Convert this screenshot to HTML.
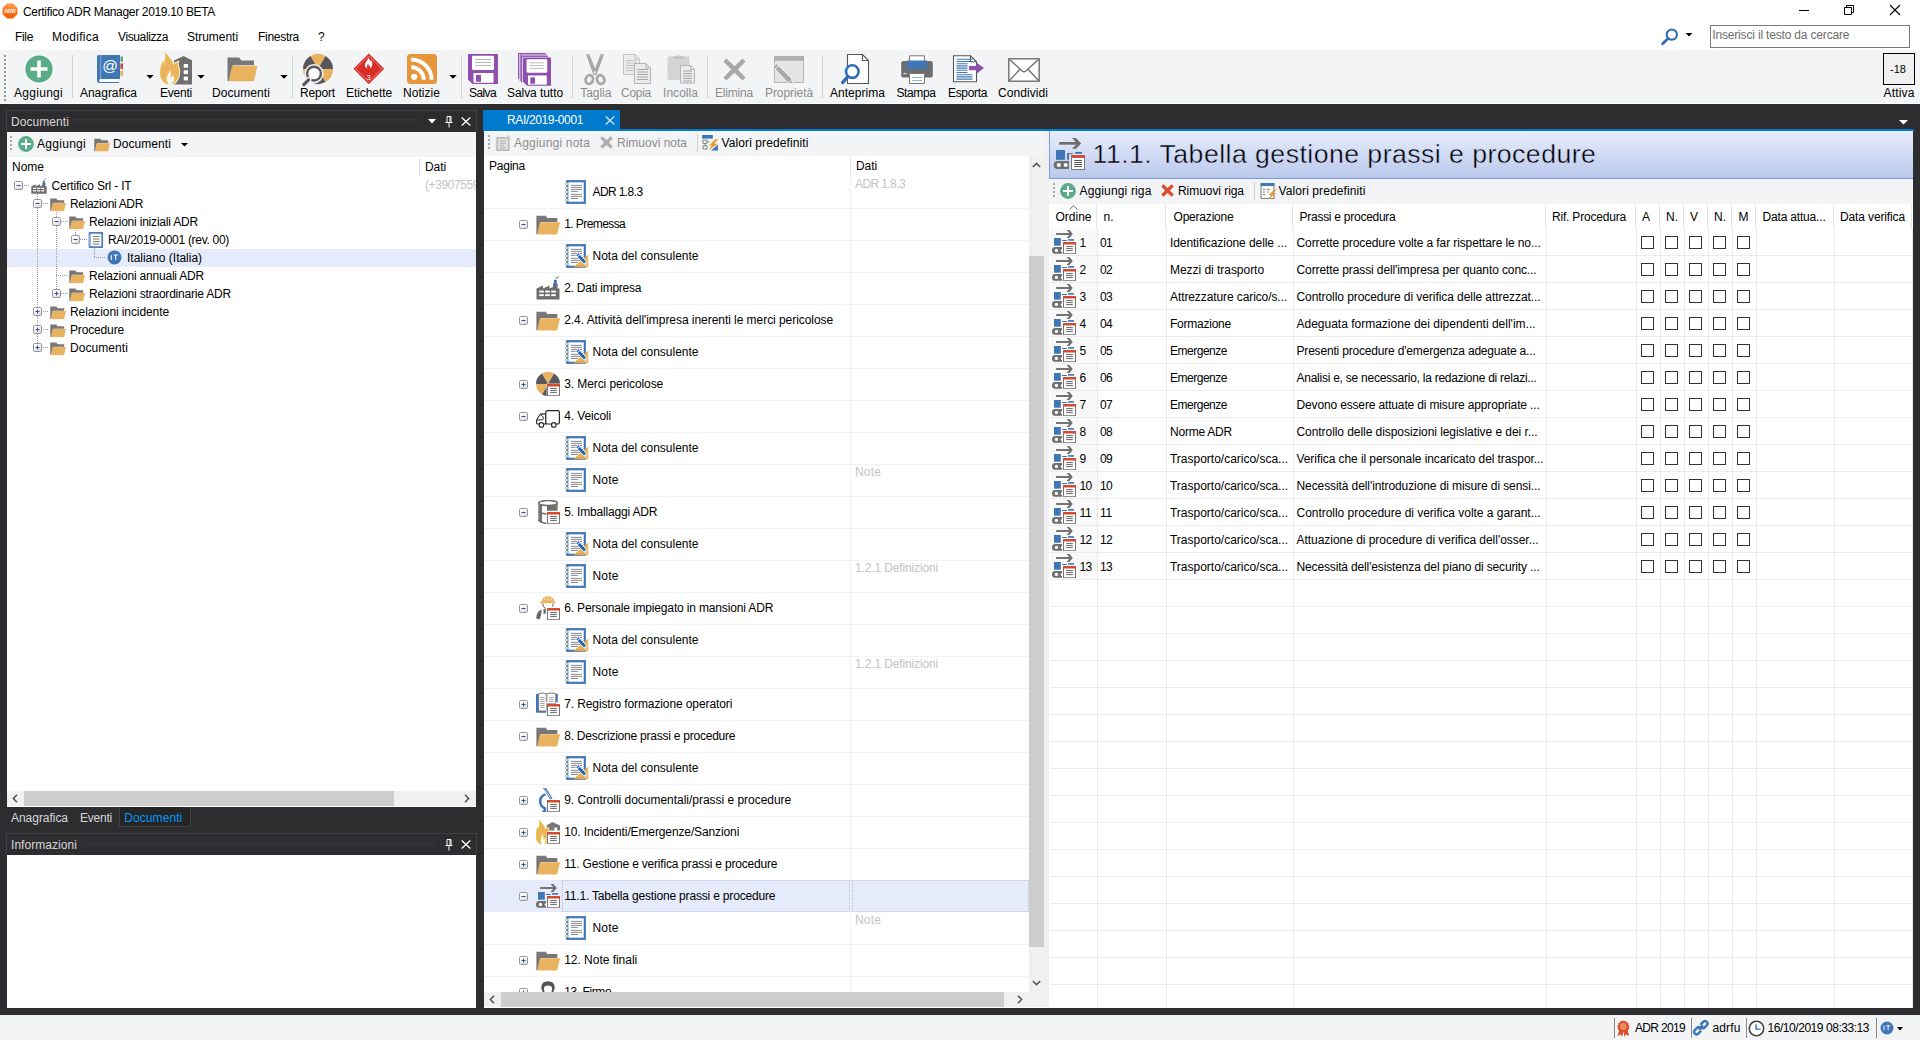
<!DOCTYPE html>
<html lang="it"><head><meta charset="utf-8"><title>Certifico ADR Manager 2019.10 BETA</title><style>
html,body{margin:0;padding:0;}
body{width:1920px;height:1040px;position:relative;overflow:hidden;background:#fff;font-family:"Liberation Sans", "DejaVu Sans", sans-serif;font-size:12px;}
div,span.t,svg.i{position:absolute;box-sizing:content-box;}
span.t{white-space:pre;line-height:16px;height:16px;font-size:12px;}
svg.i{overflow:visible;}
</style></head>
<body>
<svg width="0" height="0" style="position:absolute"><defs><linearGradient id="eg" x1="0" y1="0" x2="0.6" y2="1"><stop offset="0.3" stop-color="#ffffff"/><stop offset="1" stop-color="#dcdcdc"/></linearGradient><symbol id="add" viewBox="0 0 32 32"><circle cx="16" cy="16" r="13.6" fill="#5aab87"/><path d="M14.2 7.5h3.6v6.7h6.7v3.6h-6.7v6.7h-3.6v-6.7H7.5v-3.6h6.7z" fill="#fff"/></symbol><symbol id="add16" viewBox="0 0 16 16"><circle cx="8" cy="8" r="7.9" fill="#5aab87"/><path d="M7 3h2v4h4v2h-4v4h-2v-4H3v-2h4z" fill="#fff"/></symbol><symbol id="folder" viewBox="0 0 31 25"><path d="M0.5 0.5H12.5L14.5 3.5H27.5V8.5H6L2 24.5H0.5Z" fill="#777"/><path d="M5.3 9H31L27.3 24.8H1.6Z" fill="#e9b25f"/></symbol><symbol id="book" viewBox="0 0 32 32"><path d="M5 3.5Q5 2 6.5 2H28V26H8.5Q7 26 7 27.5Q7 29 8.5 29H27V30H8Q5 30 5 27.5Z" fill="#3f76b5"/><rect x="8" y="26.6" width="19" height="1.9" fill="#fff"/><rect x="8.3" y="2" width="0.9" height="24" fill="#8fb1dc"/><rect x="28.4" y="3.5" width="2.6" height="5.2" fill="#5aab87"/><rect x="28.4" y="10.4" width="2.6" height="5.6" fill="#d24a32"/><rect x="28.4" y="17.6" width="2.6" height="5.6" fill="#e9b25f"/><text x="18.2" y="17.6" font-family="Liberation Sans,sans-serif" font-size="15.5" fill="#fff" text-anchor="middle">@</text></symbol><symbol id="eventi" viewBox="0 0 33 33"><path d="M14 8.5L23.5 4L32 8.3V32.4H14Z" fill="#6e6e6e"/><rect x="23.7" y="12" width="4.3" height="3.8" fill="#fff"/><rect x="23.7" y="18.3" width="4.3" height="3.8" fill="#fff"/><rect x="23.7" y="24.6" width="4.3" height="3.8" fill="#fff"/><path d="M5.2 0.8C6.5 3 10 5.5 12 9.5C12.8 11 13.2 12 13.2 13C14.5 12 15.8 11 17.6 10.4C17 12.5 18.8 15 19 19C19.3 24 17 29.5 12.8 32C14.8 29 15.2 25.5 13.5 22.5C13 24 12.2 24.8 11.2 25.2C11.8 22 11 19 9.6 17.2C9.4 20 7.2 22 6.6 25C6 28 6.8 30.5 8.2 32C3.5 31 0.4 27 0.4 21.5C0.4 17 1.6 13 3 9.6C3.4 11.5 3.8 13 4.8 14.2C4.2 9 6.8 5 5.2 0.8Z" fill="#f3f4f6" stroke="#f3f4f6" stroke-width="2.4"/><path d="M5.2 0.8C6.5 3 10 5.5 12 9.5C12.8 11 13.2 12 13.2 13C14.5 12 15.8 11 17.6 10.4C17 12.5 18.8 15 19 19C19.3 24 17 29.5 12.8 32C14.8 29 15.2 25.5 13.5 22.5C13 24 12.2 24.8 11.2 25.2C11.8 22 11 19 9.6 17.2C9.4 20 7.2 22 6.6 25C6 28 6.8 30.5 8.2 32C3.5 31 0.4 27 0.4 21.5C0.4 17 1.6 13 3 9.6C3.4 11.5 3.8 13 4.8 14.2C4.2 9 6.8 5 5.2 0.8Z" fill="#e9b25f" stroke="#f1c247" stroke-width="0.9"/></symbol><symbol id="disc" viewBox="0 0 32 32"><path d="M16 16L8.50 3.01A15 15 0 0 1 23.50 3.01Z" fill="#e9b25f"/><path d="M16 16L23.50 3.01A15 15 0 0 1 31.00 16.00Z" fill="#58585a"/><path d="M16 16L31.00 16.00A15 15 0 0 1 23.50 28.99Z" fill="#e9b25f"/><path d="M16 16L23.50 28.99A15 15 0 0 1 8.50 28.99Z" fill="#58585a"/><path d="M16 16L8.50 28.99A15 15 0 0 1 1.00 16.00Z" fill="#e9b25f"/><path d="M16 16L1.00 16.00A15 15 0 0 1 8.50 3.01Z" fill="#58585a"/></symbol><symbol id="report" viewBox="0 0 34 34"><g transform="translate(2,0)"><path d="M16 16L8.50 3.01A15 15 0 0 1 23.50 3.01Z" fill="#e9b25f"/><path d="M16 16L23.50 3.01A15 15 0 0 1 31.00 16.00Z" fill="#58585a"/><path d="M16 16L31.00 16.00A15 15 0 0 1 23.50 28.99Z" fill="#e9b25f"/><path d="M16 16L23.50 28.99A15 15 0 0 1 8.50 28.99Z" fill="#58585a"/><path d="M16 16L8.50 28.99A15 15 0 0 1 1.00 16.00Z" fill="#e9b25f"/><path d="M16 16L1.00 16.00A15 15 0 0 1 8.50 3.01Z" fill="#58585a"/></g><circle cx="14" cy="20.6" r="9.6" fill="#f3f4f6"/><circle cx="14" cy="20.6" r="6.9" fill="#fff" stroke="#58585a" stroke-width="2.4"/><path d="M8.8 26.6L4 31.4" stroke="#f3f4f6" stroke-width="5.4" stroke-linecap="round"/><path d="M8.6 26.8L3.8 31.6" stroke="#58585a" stroke-width="3.2" stroke-linecap="round"/></symbol><symbol id="etichette" viewBox="0 0 34 34"><path d="M17 0.5L33.5 17L17 33.5L0.5 17Z" fill="#d92d27"/><path d="M17 3L31 17L17 31L3 17Z" fill="none" stroke="#f0a09c" stroke-width="0.7"/><g transform="translate(12.6,4.2) scale(1.12)"><path d="M3.2 0C3.6 1.6 5.2 2.6 5.8 4.4C6.1 3.8 6.1 3.3 6 2.8C7.2 4.3 7.6 6.1 7.3 7.9C7 9.7 5.8 11 4.6 11.2C5.4 10.2 5.5 9 4.8 7.8C4.6 8.6 4.3 9 3.8 9.3C4 8.2 3.7 7 3 6.2C3 7.4 2.4 8 2.2 8.9C2 9.8 2.2 10.6 2.8 11.2C1.3 10.8 0.2 9.4 0.2 7.8C0.2 6.2 1 5.2 1.8 4.2C2.6 3 3.4 1.8 3.2 0Z" fill="#fff"/></g><text x="17" y="28.6" font-family="Liberation Sans,sans-serif" font-size="7.5" fill="#fff" text-anchor="middle">3</text></symbol><symbol id="rss" viewBox="0 0 32 32"><rect x="1" y="1" width="30" height="30" rx="3.5" fill="#e6963c"/><circle cx="8.2" cy="23.8" r="3.1" fill="#fff"/><path d="M5.2 14.2A12.6 12.6 0 0 1 17.8 26.8" fill="none" stroke="#fff" stroke-width="4"/><path d="M5.2 6.4A20.4 20.4 0 0 1 25.6 26.8" fill="none" stroke="#fff" stroke-width="4"/></symbol><symbol id="salva" viewBox="0 0 30 30"><path d="M0 0H30V30H4.5L0 25.5Z" fill="#8e4fad"/><rect x="4" y="1.8" width="22" height="14.2" rx="1.2" fill="#fff"/><path d="M7 5.5H23M7 8.5H23M7 11.5H23" stroke="#b9b9b9" stroke-width="1"/><rect x="5.5" y="19" width="20" height="9.8" fill="#fff"/><rect x="8" y="21" width="5" height="6.8" fill="#8e4fad"/></symbol><symbol id="salvatutto" viewBox="0 0 33 33"><path d="M0.5 0.5H27.5" stroke="#8e4fad" stroke-width="1" fill="none"/><path d="M0.5 0V26" stroke="#8e4fad" stroke-width="1"/><path d="M2.2 2H29" stroke="#8e4fad" stroke-width="1"/><path d="M2.2 1.5V28" stroke="#8e4fad" stroke-width="1"/><path d="M3.6 3.4H30" stroke="#8e4fad" stroke-width="1"/><path d="M3.6 3V29.5" stroke="#8e4fad" stroke-width="1"/><g transform="translate(4.8,4.6) scale(0.94)"><path d="M0 0H30V30H4.5L0 25.5Z" fill="#8e4fad"/><rect x="4" y="1.8" width="22" height="14.2" rx="1.2" fill="#fff"/><path d="M7 5.5H23M7 8.5H23M7 11.5H23" stroke="#b9b9b9" stroke-width="1"/><rect x="5.5" y="19" width="20" height="9.8" fill="#fff"/><rect x="8" y="21" width="5" height="6.8" fill="#8e4fad"/></g></symbol><symbol id="taglia" viewBox="0 0 22 32"><path d="M2 0.3L5.4 0.3L13 19.5L9.6 21.6Z" fill="#a8a8a8"/><path d="M20 0.3L16.6 0.3L9 19.5L12.4 21.6Z" fill="#a8a8a8"/><ellipse cx="5.3" cy="25.6" rx="3.6" ry="4.4" fill="none" stroke="#a8a8a8" stroke-width="2.8" transform="rotate(18 5.3 25.6)"/><ellipse cx="16.7" cy="25.6" rx="3.6" ry="4.4" fill="none" stroke="#a8a8a8" stroke-width="2.8" transform="rotate(-18 16.7 25.6)"/><circle cx="11" cy="18.3" r="1.1" fill="#f3f4f6"/></symbol><symbol id="copia" viewBox="0 0 29 31"><path d="M0.5 0.5H12.0L16.5 5.0V20.5H0.5Z" fill="#ebebeb" stroke="#c4c4c4" stroke-width="1"/><path d="M12.0 0.5V5.0H16.5" fill="none" stroke="#c4c4c4" stroke-width="1"/><path d="M3.0 6.5H14.0" stroke="#c4c4c4" stroke-width="1"/><path d="M3.0 9.0H14.0" stroke="#c4c4c4" stroke-width="1"/><path d="M3.0 11.5H14.0" stroke="#c4c4c4" stroke-width="1"/><path d="M3.0 14.0H14.0" stroke="#c4c4c4" stroke-width="1"/><path d="M3.0 16.5H14.0" stroke="#c4c4c4" stroke-width="1"/><path d="M11.5 9.5H23.0L27.5 14.0V29.5H11.5Z" fill="#ebebeb" stroke="#b4b4b4" stroke-width="1"/><path d="M23.0 9.5V14.0H27.5" fill="none" stroke="#b4b4b4" stroke-width="1"/><path d="M14.0 15.5H25.0" stroke="#a8a8a8" stroke-width="1"/><path d="M14.0 18.0H25.0" stroke="#a8a8a8" stroke-width="1"/><path d="M14.0 20.5H25.0" stroke="#a8a8a8" stroke-width="1"/><path d="M14.0 23.0H25.0" stroke="#a8a8a8" stroke-width="1"/><path d="M14.0 25.5H25.0" stroke="#a8a8a8" stroke-width="1"/></symbol><symbol id="incolla" viewBox="0 0 29 31"><rect x="0.5" y="3.3" width="22" height="23.6" rx="1.6" fill="#d4d4d4"/><path d="M6.5 5.6V3.6H9.6Q11.5 -0.6 13.4 3.6H16.5V5.6Z" fill="#bdbdbd"/><circle cx="11.5" cy="2.8" r="0.9" fill="#f3f4f6"/><path d="M13.5 12.5H23.5L27.5 16.5V30.0H13.5Z" fill="#ebebeb" stroke="#b4b4b4" stroke-width="1"/><path d="M23.5 12.5V16.5H27.5" fill="none" stroke="#b4b4b4" stroke-width="1"/><path d="M16.0 18.0H25.0" stroke="#a8a8a8" stroke-width="1"/><path d="M16.0 20.5H25.0" stroke="#a8a8a8" stroke-width="1"/><path d="M16.0 23.0H25.0" stroke="#a8a8a8" stroke-width="1"/><path d="M16.0 25.5H25.0" stroke="#a8a8a8" stroke-width="1"/><path d="M16.0 28.0H25.0" stroke="#a8a8a8" stroke-width="1"/></symbol><symbol id="elimina" viewBox="0 0 24 24"><path d="M3.6 0.4L12 8.6L20.4 0.4L23.6 3.6L15.4 12L23.6 20.4L20.4 23.6L12 15.4L3.6 23.6L0.4 20.4L8.6 12L0.4 3.6Z" fill="#a8a8a8"/></symbol><symbol id="proprieta" viewBox="0 0 32 30"><rect x="1.5" y="1.5" width="29" height="26" fill="#e4e4e4" stroke="#b6b6b6" stroke-width="1"/><rect x="1" y="1" width="30" height="4.8" fill="#b0b0b0"/><path d="M0.2 11.8L3.4 8.6L18.4 23.4L20.2 29.4L14.2 27.2Z" fill="#a8a8a8" stroke="#f0f0f0" stroke-width="1"/><path d="M2.2 14L5.6 10.7" stroke="#f0f0f0" stroke-width="1"/><path d="M15.6 27.6L19 24.4" stroke="#f0f0f0" stroke-width="0.8"/></symbol><symbol id="anteprima" viewBox="0 0 30 32"><path d="M6.5 1.5H21.5L27.5 7.5V30.5H6.5Z" fill="#fff" stroke="#555" stroke-width="1.1"/><path d="M21.5 1.5V7.5H27.5" fill="none" stroke="#555" stroke-width="1.1"/><circle cx="11.3" cy="18.6" r="6.3" fill="#fff" stroke="#2f6db5" stroke-width="2.6"/><path d="M6.5 24L1.8 29.4" stroke="#2f6db5" stroke-width="3.4" stroke-linecap="round"/></symbol><symbol id="stampa" viewBox="0 0 32 30"><path d="M8.5 0.8H23.5V8H8.5Z" fill="#fff" stroke="#777" stroke-width="1"/><rect x="0.2" y="6" width="31.6" height="16.6" rx="2.2" fill="#6e6e6e"/><path d="M6 5.6H26V12.4Q26 14 24.4 14H7.6Q6 14 6 12.4Z" fill="#3f76b5"/><rect x="2.6" y="18" width="3" height="1.2" fill="#ddd"/><path d="M8.5 18.5H23.5V28.5H8.5Z" fill="#fff" stroke="#777" stroke-width="1"/><path d="M11 22.5H21M11 25.5H21" stroke="#8fb1dc" stroke-width="1"/></symbol><symbol id="esporta" viewBox="0 0 33 30"><path d="M1.5 1.5H18.5L24.5 7.5V27.5H1.5Z" fill="#fff" stroke="#555" stroke-width="1.1"/><path d="M18.5 1.5V7.5H24.5" fill="none" stroke="#555" stroke-width="1.1"/><path d="M4.5 5H20.5" stroke="#3f76b5" stroke-width="1.1"/><path d="M4.5 7.2H20.5" stroke="#3f76b5" stroke-width="1.1"/><path d="M4.5 9.4H15.5" stroke="#3f76b5" stroke-width="1.1"/><path d="M4.5 11.6H15.5" stroke="#3f76b5" stroke-width="1.1"/><path d="M4.5 13.8H15.5" stroke="#3f76b5" stroke-width="1.1"/><path d="M4.5 16H15.5" stroke="#3f76b5" stroke-width="1.1"/><path d="M4.5 18.2H15.5" stroke="#3f76b5" stroke-width="1.1"/><path d="M4.5 20.4H20.5" stroke="#3f76b5" stroke-width="1.1"/><path d="M4.5 22.6H20.5" stroke="#3f76b5" stroke-width="1.1"/><path d="M4.5 24.8H20.5" stroke="#3f76b5" stroke-width="1.1"/><path d="M17 11.6H24.5V8.2L32 13.8L24.5 19.4V16H17Z" fill="#8e4fad"/></symbol><symbol id="condividi" viewBox="0 0 32 24"><rect x="0.8" y="0.8" width="30.4" height="22.4" fill="#fff" stroke="#6e6e6e" stroke-width="1.4"/><path d="M1 1L14.5 13.2Q16 14.4 17.5 13.2L31 1" fill="none" stroke="#6e6e6e" stroke-width="1.3"/><path d="M1 23L12 11.2M31 23L20 11.2" fill="none" stroke="#6e6e6e" stroke-width="1.3"/></symbol><symbol id="search" viewBox="0 0 20 20"><circle cx="11.8" cy="7.6" r="5.1" fill="#fff" stroke="#2f6db5" stroke-width="2.1"/><path d="M7.8 11.8L2.6 16.8" stroke="#2f6db5" stroke-width="2.8" stroke-linecap="round"/></symbol><symbol id="app" viewBox="0 0 16 16"><defs><linearGradient id="ag" x1="0" y1="0" x2="0" y2="1"><stop offset="0" stop-color="#ff9a4a"/><stop offset="1" stop-color="#f55a00"/></linearGradient></defs><path d="M5 0.5H11L15.5 5V11L11 15.5H5L0.5 11V5Z" fill="url(#ag)"/><text x="8" y="10" font-family="Liberation Sans,sans-serif" font-size="5.2" font-weight="bold" fill="#fff" text-anchor="middle">ADR</text></symbol><symbol id="factory" viewBox="0 0 24 24"><path d="M0.5 23.5V12.5L7 9.5V12.5L13.5 9.5V12.5L17 10.9V7.4H21.6V12.5H23.5V23.5Z" fill="#6e6e6e"/><rect x="17.8" y="4" width="3" height="5.4" fill="#3f76b5"/><path d="M19.4 3.4Q19.6 1.6 23 0.8" stroke="#6e6e6e" stroke-width="1" fill="none"/><rect x="3.2" y="14.6" width="4.6" height="1.9" fill="#fff"/><rect x="9.2" y="14.6" width="4.6" height="1.9" fill="#fff"/><rect x="15.2" y="14.6" width="4.6" height="1.9" fill="#fff"/><rect x="3.2" y="18.2" width="4.6" height="1.9" fill="#fff"/><rect x="9.2" y="18.2" width="4.6" height="1.9" fill="#fff"/><rect x="15.2" y="18.2" width="4.6" height="1.9" fill="#fff"/></symbol><symbol id="note" viewBox="0 0 21 24"><rect x="2.2" y="1.2" width="17.6" height="21.6" fill="#fff" stroke="#3f76b5" stroke-width="2.2"/><circle cx="1.7" cy="4" r="1.3" fill="#fff" stroke="#999" stroke-width="0.7"/><circle cx="1.7" cy="8" r="1.3" fill="#fff" stroke="#999" stroke-width="0.7"/><circle cx="1.7" cy="12" r="1.3" fill="#fff" stroke="#999" stroke-width="0.7"/><circle cx="1.7" cy="16" r="1.3" fill="#fff" stroke="#999" stroke-width="0.7"/><circle cx="1.7" cy="20" r="1.3" fill="#fff" stroke="#999" stroke-width="0.7"/><path d="M6 5.4H17" stroke="#8a8a8a" stroke-width="1"/><path d="M6 7.4H17" stroke="#8a8a8a" stroke-width="1"/><path d="M6 9.4H17" stroke="#8a8a8a" stroke-width="1"/><path d="M6 11.4H13" stroke="#8a8a8a" stroke-width="1"/><path d="M6 14.4H17" stroke="#8a8a8a" stroke-width="1"/><path d="M6 16.4H17" stroke="#8a8a8a" stroke-width="1"/><path d="M6 18.5H13" stroke="#8a8a8a" stroke-width="1"/></symbol><symbol id="notepen" viewBox="0 0 24 24"><rect x="2.2" y="1.2" width="17.6" height="21.6" fill="#fff" stroke="#3f76b5" stroke-width="2.2"/><circle cx="1.7" cy="4" r="1.3" fill="#fff" stroke="#999" stroke-width="0.7"/><circle cx="1.7" cy="8" r="1.3" fill="#fff" stroke="#999" stroke-width="0.7"/><circle cx="1.7" cy="12" r="1.3" fill="#fff" stroke="#999" stroke-width="0.7"/><circle cx="1.7" cy="16" r="1.3" fill="#fff" stroke="#999" stroke-width="0.7"/><circle cx="1.7" cy="20" r="1.3" fill="#fff" stroke="#999" stroke-width="0.7"/><path d="M6 5.4H17" stroke="#8a8a8a" stroke-width="1"/><path d="M6 7.4H17" stroke="#8a8a8a" stroke-width="1"/><path d="M6 9.4H17" stroke="#8a8a8a" stroke-width="1"/><path d="M6 11.4H13" stroke="#8a8a8a" stroke-width="1"/><path d="M6 14.4H17" stroke="#8a8a8a" stroke-width="1"/><path d="M6 16.4H17" stroke="#8a8a8a" stroke-width="1"/><path d="M6 18.5H13" stroke="#8a8a8a" stroke-width="1"/><path d="M23.2 10.5V23.2H8.2Z" fill="#e9b25f"/><path d="M11 22.2h1M13 21.4h1M15 22.2h1M17 21.4h1" stroke="#b98a3a" stroke-width="0.8"/><path d="M10.8 11.2L13.6 8.8L20.6 16.6L21.4 20.4L17.8 19Z" fill="#2f63ad" stroke="#fff" stroke-width="0.9"/><path d="M12.2 12.8L15 10.4" stroke="#fff" stroke-width="0.9"/><path d="M20.1 18.6L21.4 20.4L19.4 19.7Z" fill="#fff"/></symbol><symbol id="merci" viewBox="0 0 24 24"><path d="M12 12L6.00 1.61A12 12 0 0 1 18.00 1.61Z" fill="#e9b25f"/><path d="M12 12L18.00 1.61A12 12 0 0 1 24.00 12.00Z" fill="#58585a"/><path d="M12 12L24.00 12.00A12 12 0 0 1 18.00 22.39Z" fill="#e9b25f"/><path d="M12 12L18.00 22.39A12 12 0 0 1 6.00 22.39Z" fill="#58585a"/><path d="M12 12L6.00 22.39A12 12 0 0 1 0.00 12.00Z" fill="#e9b25f"/><path d="M12 12L0.00 12.00A12 12 0 0 1 6.00 1.61Z" fill="#58585a"/><rect x="10.6" y="11.6" width="13.8" height="13" fill="#fff" opacity="0.9"/><rect x="11.5" y="12.5" width="12" height="11.2" fill="#fff" stroke="#777" stroke-width="1"/><rect x="11" y="12" width="13" height="2.5" fill="#d24a32"/><path d="M14.2 16.6H20.8M14.2 18.6H20.8M14.2 20.6H20.8" stroke="#666" stroke-width="1"/></symbol><symbol id="truck" viewBox="0 0 24 20"><path d="M9.8 4.8H5.8Q4.6 4.8 3.8 6L1.2 10Q0.6 10.8 0.6 11.8V14Q0.6 15 1.6 15H9.8Z" fill="#fff" stroke="#2b2b2b" stroke-width="1.15"/><path d="M1 10.9H6Q7.4 10.9 7.4 9.4Q7.4 6.6 4.4 5.6" fill="none" stroke="#2b2b2b" stroke-width="1"/><rect x="9.8" y="1.6" width="13.6" height="13.4" rx="1.6" fill="#fff" stroke="#2b2b2b" stroke-width="1.2"/><circle cx="5.4" cy="15.9" r="2.3" fill="#fff" stroke="#2b2b2b" stroke-width="1.15"/><circle cx="17.8" cy="15.9" r="2.3" fill="#fff" stroke="#2b2b2b" stroke-width="1.15"/></symbol><symbol id="barrel" viewBox="0 0 24 24"><path d="M3 3.4V21.4Q6 23.2 10.6 23.4V3.4Z" fill="#fff"/><rect x="3.4" y="4" width="2.6" height="18.2" fill="#6e6e6e"/><rect x="11" y="5.4" width="9.8" height="5.3" fill="#6e6e6e"/><path d="M21 3.5V10.6M3 3.5V21" stroke="#6e6e6e" stroke-width="1.3"/><ellipse cx="12" cy="3" rx="9.4" ry="2.5" fill="#fff" stroke="#6e6e6e" stroke-width="1.5"/><path d="M2.2 11.8Q5.5 13.6 10.6 13.9" stroke="#6e6e6e" stroke-width="1.5" fill="none"/><path d="M2.2 20Q5 22.8 10.6 23.3" stroke="#6e6e6e" stroke-width="1.7" fill="none"/><rect x="10.6" y="11.6" width="13.8" height="13" fill="#fff" opacity="0.9"/><rect x="11.5" y="12.5" width="12" height="11.2" fill="#fff" stroke="#777" stroke-width="1"/><rect x="11" y="12" width="13" height="2.5" fill="#d24a32"/><path d="M14.2 16.6H20.8M14.2 18.6H20.8M14.2 20.6H20.8" stroke="#666" stroke-width="1"/></symbol><symbol id="worker" viewBox="0 0 24 24"><path d="M6 6Q6 0.2 12 0.2Q18 0.2 18 6V5.4H19.4V7.2H4.2V5.4H6Z" fill="#e9b25f"/><path d="M9 1.6V4.2M12 1.2V4.4M15 1.6V4.2" stroke="#fbe7bd" stroke-width="1"/><path d="M6.6 7.6Q6.8 10.5 9.4 12.6" fill="none" stroke="#555" stroke-width="1"/><path d="M17.4 7.6L16.6 10.6" fill="none" stroke="#555" stroke-width="1"/><path d="M7.4 13.4L9.8 12.6V17.6L7.6 18Z" fill="#666"/><path d="M0.2 22.6Q0.4 15.4 5.6 13.6L5.2 18.2L3.6 23.6Z" fill="#666"/><rect x="10.6" y="11.6" width="13.8" height="13" fill="#fff" opacity="0.9"/><rect x="11.5" y="12.5" width="12" height="11.2" fill="#fff" stroke="#777" stroke-width="1"/><rect x="11" y="12" width="13" height="2.5" fill="#d24a32"/><path d="M14.2 16.6H20.8M14.2 18.6H20.8M14.2 20.6H20.8" stroke="#666" stroke-width="1"/></symbol><symbol id="registro" viewBox="0 0 24 24"><path d="M0 2H2.6V18.6H10V20.8H1Q0 20.8 0 19.6Z" fill="#3f76b5"/><path d="M20 2H21.8V10.6L20 9.6Z" fill="#3f76b5"/><path d="M2.6 1.6Q6.5 0.4 10.6 1.8Q15 0.4 19.8 1.6V11.5H10.6V19H2.6Z" fill="#fff" stroke="#777" stroke-width="1"/><path d="M10.6 2V10" stroke="#999" stroke-width="1.6"/><path d="M4.2 5.4H8.6M4.2 7.4H8.6M4.2 9.4H8.6M4.2 11.4H8.6M4.2 13.4H8.6M4.2 15.4H8.6M13 5.4H17.6M13 7.4H17.6M13 9.4H17.6" stroke="#999" stroke-width="0.9"/><rect x="10.6" y="11.6" width="13.8" height="13" fill="#fff" opacity="0.9"/><rect x="11.5" y="12.5" width="12" height="11.2" fill="#fff" stroke="#777" stroke-width="1"/><rect x="11" y="12" width="13" height="2.5" fill="#d24a32"/><path d="M14.2 16.6H20.8M14.2 18.6H20.8M14.2 20.6H20.8" stroke="#666" stroke-width="1"/></symbol><symbol id="controlli" viewBox="0 0 24 24"><path d="M9.6 6.4Q4.2 8 4.2 13.4Q4.2 18.4 9 20.4V23.6H6.4" fill="none" stroke="#3f76b5" stroke-width="2.5"/><path d="M7.6 0.6L10 0L16.6 10.4L14 11.6Z" fill="#3f76b5"/><path d="M9.4 2.2L14.8 10.4" stroke="#fff" stroke-width="0.8"/><path d="M7 1L8 0" stroke="#777" stroke-width="0.8"/><rect x="10.6" y="11.6" width="13.8" height="13" fill="#fff" opacity="0.9"/><rect x="11.5" y="12.5" width="12" height="11.2" fill="#fff" stroke="#777" stroke-width="1"/><rect x="11" y="12" width="13" height="2.5" fill="#d24a32"/><path d="M14.2 16.6H20.8M14.2 18.6H20.8M14.2 20.6H20.8" stroke="#666" stroke-width="1"/></symbol><symbol id="incidenti" viewBox="0 0 24 24"><path d="M10.6 5.6L16.3 2L24 5.6V10.6H21.2V7.4H18.4V10.6H13.2V7.4H10.6Z" fill="#777"/><g transform="translate(-0.2,-0.2) scale(0.7,0.76)"><path d="M5.2 0.8C6.5 3 10 5.5 12 9.5C12.8 11 13.2 12 13.2 13C14.5 12 15.8 11 17.6 10.4C17 12.5 18.8 15 19 19C19.3 24 17 29.5 12.8 32C14.8 29 15.2 25.5 13.5 22.5C13 24 12.2 24.8 11.2 25.2C11.8 22 11 19 9.6 17.2C9.4 20 7.2 22 6.6 25C6 28 6.8 30.5 8.2 32C3.5 31 0.4 27 0.4 21.5C0.4 17 1.6 13 3 9.6C3.4 11.5 3.8 13 4.8 14.2C4.2 9 6.8 5 5.2 0.8Z" fill="#e9b25f" stroke="#f0c030" stroke-width="1.3"/></g><rect x="10.6" y="11.6" width="13.8" height="13" fill="#fff" opacity="0.9"/><rect x="11.5" y="12.5" width="12" height="11.2" fill="#fff" stroke="#777" stroke-width="1"/><rect x="11" y="12" width="13" height="2.5" fill="#d24a32"/><path d="M14.2 16.6H20.8M14.2 18.6H20.8M14.2 20.6H20.8" stroke="#666" stroke-width="1"/></symbol><symbol id="gestione32" viewBox="0 0 32 32"><rect x="6.2" y="4" width="19.5" height="2.7" fill="#6e6e6e"/><path d="M19 0H23L28.2 5.4L23 10.8H19L24.2 5.4Z" fill="#6e6e6e"/><rect x="3" y="12" width="9" height="9.8" fill="#3f76b5"/><rect x="14.1" y="15.1" width="1.9" height="6.7" fill="#3f76b5"/><rect x="14.1" y="15.1" width="5.7" height="1.1" fill="#3f76b5"/><rect x="22.1" y="14" width="6.9" height="1.8" fill="#3f76b5"/><path d="M4 23.1H16V31H4A4 4 0 0 1 4 23.1Z" fill="#6e6e6e"/><circle cx="5.8" cy="27" r="2.1" fill="#fff"/><circle cx="12.7" cy="27" r="2.1" fill="#fff"/><rect x="17.4" y="16.4" width="15.2" height="16.2" fill="#fff" opacity="0.6"/><rect x="18.5" y="17.5" width="13" height="14" fill="#fff" stroke="#777" stroke-width="1"/><rect x="18" y="17" width="14" height="2.9" fill="#d24a32"/><path d="M21.2 22.5H29M21.2 24.5H29M21.2 26.5H29M21.2 28.6H29" stroke="#555" stroke-width="1"/></symbol><symbol id="gestione" viewBox="0 0 24 24"><rect x="4.1" y="3.05" width="14.5" height="1.9" fill="#6e6e6e"/><path d="M14.6 0H17.4L20.8 4L17.4 8H14.6L18 4Z" fill="#6e6e6e"/><rect x="2" y="8" width="6.8" height="7.7" fill="#3f76b5"/><rect x="10.1" y="10" width="4.8" height="1" fill="#3f76b5"/><rect x="16" y="9.1" width="6" height="1.6" fill="#3f76b5"/><path d="M3.4 17H10V23.8H3.4A3.4 3.4 0 0 1 3.4 17Z" fill="#6e6e6e"/><circle cx="4.4" cy="20.4" r="1.7" fill="#fff"/><circle cx="10.2" cy="20.4" r="1.5" fill="#fff"/><rect x="10.6" y="11.6" width="13.8" height="13" fill="#fff" opacity="0.9"/><rect x="11.5" y="12.5" width="12" height="11.2" fill="#fff" stroke="#777" stroke-width="1"/><rect x="11" y="12" width="13" height="2.5" fill="#d24a32"/><path d="M14.2 16.6H20.8M14.2 18.6H20.8M14.2 20.6H20.8" stroke="#666" stroke-width="1"/></symbol><symbol id="person" viewBox="0 0 24 24"><path d="M5.5 9Q4.5 1.2 12 1.2Q19.5 1.2 18.5 9L17 13H7Z" fill="#555"/><path d="M8 8Q8 5.5 12 5.5Q16 5.5 16 8Q16 15 12 15Q8 15 8 8Z" fill="#fff"/></symbol><symbol id="doclist" viewBox="0 0 15 16"><rect x="1.6" y="0.9" width="12.6" height="14.2" fill="#fff" stroke="#3f76b5" stroke-width="1.6"/><circle cx="1.6" cy="3" r="0.9" fill="#fff" stroke="#3f76b5" stroke-width="0.6"/><circle cx="1.6" cy="5.5" r="0.9" fill="#fff" stroke="#3f76b5" stroke-width="0.6"/><circle cx="1.6" cy="8" r="0.9" fill="#fff" stroke="#3f76b5" stroke-width="0.6"/><circle cx="1.6" cy="10.5" r="0.9" fill="#fff" stroke="#3f76b5" stroke-width="0.6"/><circle cx="1.6" cy="13" r="0.9" fill="#fff" stroke="#3f76b5" stroke-width="0.6"/><path d="M5 4.5H11.5M5 7H11.5M5 9.5H11.5M5 12H11.5" stroke="#777" stroke-width="1"/></symbol><symbol id="it" viewBox="0 0 16 16"><circle cx="8" cy="8" r="7.4" fill="#3f76b5"/><path d="M4.6 5.4V10.6M7 5.4H11.6M9.3 5.4V10.6" stroke="#fff" stroke-width="1.1" fill="none"/></symbol><symbol id="xred" viewBox="0 0 14 14"><path d="M2.6 0.2L7 4.4L11.4 0.2L13.8 2.6L9.6 7L13.8 11.4L11.4 13.8L7 9.6L2.6 13.8L0.2 11.4L4.4 7L0.2 2.6Z" fill="#d8502e"/></symbol><symbol id="xgrey" viewBox="0 0 14 14"><path d="M2.6 0.2L7 4.4L11.4 0.2L13.8 2.6L9.6 7L13.8 11.4L11.4 13.8L7 9.6L2.6 13.8L0.2 11.4L4.4 7L0.2 2.6Z" fill="#b0b0b0"/></symbol><symbol id="valori" viewBox="0 0 17 17"><rect x="1" y="2.6" width="13" height="12.8" fill="#fff" stroke="#777" stroke-width="1"/><rect x="0.5" y="0" width="14" height="2.7" fill="#3f76b5"/><path d="M3 6.4H5.2M3 9H5.2M3 11.6H5.2M6.8 6.4H9.6M6.8 9H8.6" stroke="#777" stroke-width="1"/><path d="M14.4 6.6L8.4 12.2H11.2L7.8 16.8L16.2 10.2H13L16.4 6.6Z" fill="#e8962e"/></symbol><symbol id="valori2" viewBox="0 0 17 16"><rect x="0" y="0" width="10.8" height="3.6" fill="#3f76b5"/><path d="M1 5.2H5V8.4H1ZM1 10.8H5V14H1Z" fill="#fff" stroke="#777" stroke-width="0.9"/><path d="M3 8.4V10.8M5 6.8H7.2" stroke="#777" stroke-width="0.9" fill="none"/><path d="M16 9.6V15.6H9Z" fill="#3f76b5"/><path d="M13.5 4.2L7 10.6H10L6.4 15.6L15.6 8.8H12.2L16 4.2Z" fill="#e8962e"/></symbol><symbol id="addnote" viewBox="0 0 16 16"><rect x="2.2" y="2.8" width="11.6" height="12.4" fill="#e2e2e2" stroke="#b0b0b0" stroke-width="1.4"/><circle cx="2" cy="4.5" r="0.9" fill="#eee" stroke="#b0b0b0" stroke-width="0.6"/><circle cx="2" cy="7" r="0.9" fill="#eee" stroke="#b0b0b0" stroke-width="0.6"/><circle cx="2" cy="9.5" r="0.9" fill="#eee" stroke="#b0b0b0" stroke-width="0.6"/><circle cx="2" cy="12" r="0.9" fill="#eee" stroke="#b0b0b0" stroke-width="0.6"/><circle cx="2" cy="14" r="0.9" fill="#eee" stroke="#b0b0b0" stroke-width="0.6"/><path d="M5 6H11M5 8.3H11M5 10.6H9M5 12.9H11" stroke="#aaa" stroke-width="0.9"/><path d="M13 0V5M10.5 2.5H15.5M11.2 0.7L14.8 4.3M14.8 0.7L11.2 4.3" stroke="#c8c8c8" stroke-width="0.8"/></symbol><symbol id="medal" viewBox="0 0 14 16"><path d="M3 9L1.6 15.2L4.4 13.8L6 15.8L7 10Z" fill="#d8502e"/><path d="M11 9L12.4 15.2L9.6 13.8L8 15.8L7 10Z" fill="#d8502e"/><path d="M7 0.2L8.3 1.2L9.9 0.9L10.6 2.4L12.2 2.8L12.1 4.4L13.3 5.5L12.5 6.9L13.1 8.4L11.8 9.3L11.6 10.9L10 11L9 12.3L7.5 11.7L6 12.4L5 11.1L3.4 11L3.1 9.4L1.8 8.5L2.4 7L1.5 5.6L2.7 4.5L2.5 2.9L4.1 2.4L4.8 0.9L6.4 1.2Z" fill="#d8502e" transform="translate(-0.4,0)"/><circle cx="6.9" cy="6.2" r="3.3" fill="#ef8a5a"/></symbol><symbol id="link" viewBox="0 0 16 16"><g fill="none" stroke="#3f76b5" stroke-width="2.3" stroke-linecap="round"><path d="M7 9L9.4 6.6"/><path d="M8.4 4.6L10.4 2.6Q12 1 13.6 2.6Q15.2 4.2 13.6 5.8L11.6 7.8Q10 9.2 8.6 8"/><path d="M7.8 11.4L5.8 13.4Q4.2 15 2.6 13.4Q1 11.8 2.6 10.2L4.6 8.2Q6.2 6.8 7.6 8"/></g></symbol><symbol id="clock" viewBox="0 0 16 16"><circle cx="8" cy="8" r="6.8" fill="#fff" stroke="#444" stroke-width="1.5"/><path d="M7.6 4V8.6H12" fill="none" stroke="#2f6db5" stroke-width="1.3"/></symbol></defs></svg>
<svg class="i" style="left:2.2px;top:2.6px;" width="16" height="16"><use href="#app"/></svg>
<span class="t" style="left:23px;top:3.5px;color:#000;letter-spacing:-0.329px;">Certifico ADR Manager 2019.10 BETA</span>
<svg class="i" style="left:1790px;top:0" width="130" height="22"><path d="M9 10.5H19" stroke="#000" stroke-width="1"/><path d="M54.5 7.5H61.5V14.5H54.5Z M56.5 7.5V5.5H63.5V12.5H61.5" fill="none" stroke="#000" stroke-width="1"/><path d="M100 5L110 15M110 5L100 15" stroke="#000" stroke-width="1.1"/></svg>
<span class="t" style="left:15px;top:28.5px;color:#000;letter-spacing:-0.336px;">File</span>
<span class="t" style="left:52px;top:28.5px;color:#000;letter-spacing:0.289px;">Modifica</span>
<span class="t" style="left:118px;top:28.5px;color:#000;letter-spacing:-0.381px;">Visualizza</span>
<span class="t" style="left:187px;top:28.5px;color:#000;letter-spacing:-0.038px;">Strumenti</span>
<span class="t" style="left:258px;top:28.5px;color:#000;letter-spacing:-0.293px;">Finestra</span>
<span class="t" style="left:318px;top:28.5px;color:#000;letter-spacing:-1.672px;">?</span>
<svg class="i" style="left:1660px;top:26.5px;" width="20" height="20"><use href="#search"/></svg>
<svg class="i" style="left:1685px;top:33px" width="8" height="4"><path d="M0.5 0H7.5L4 3.6Z" fill="#000"/></svg>
<div style="left:1710px;top:25px;width:198px;height:21px;background:#fff;border:1px solid #7a7a7a;"></div>
<span class="t" style="left:1712.3px;top:27.0px;color:#6d6d6d;letter-spacing:-0.173px;">Inserisci il testo da cercare</span>
<div style="left:0px;top:50px;width:1920px;height:53px;background:#f3f4f6;"></div>
<div style="left:0px;top:103px;width:1920px;height:1px;background:#fff;"></div>
<div style="left:4px;top:55px;width:2px;height:46px;background-image:repeating-linear-gradient(#9a9a9a 0 2px,transparent 2px 4px);"></div>
<svg class="i" style="left:22.5px;top:52.5px;" width="32" height="32"><use href="#add"/></svg>
<span class="t" style="left:14px;top:84.5px;color:#000;letter-spacing:0.287px;">Aggiungi</span>
<div style="left:72px;top:55px;width:1px;height:43px;background:#d2d2d2;"></div>
<svg class="i" style="left:92px;top:53px;" width="32" height="32"><use href="#book"/></svg>
<span class="t" style="left:80px;top:84.5px;color:#000;letter-spacing:-0.036px;">Anagrafica</span>
<svg class="i" style="left:146.2px;top:75px" width="8" height="4"><path d="M0.3 0H7.7L4 3.8Z" fill="#000"/></svg>
<svg class="i" style="left:160px;top:52px;" width="33" height="33"><use href="#eventi"/></svg>
<span class="t" style="left:160px;top:84.5px;color:#000;letter-spacing:-0.224px;">Eventi</span>
<svg class="i" style="left:196.5px;top:75px" width="8" height="4"><path d="M0.3 0H7.7L4 3.8Z" fill="#000"/></svg>
<svg class="i" style="left:226.5px;top:57.3px;" width="30.5" height="24.6"><use href="#folder"/></svg>
<span class="t" style="left:212px;top:84.5px;color:#000;letter-spacing:0.071px;">Documenti</span>
<svg class="i" style="left:280.2px;top:75px" width="8" height="4"><path d="M0.3 0H7.7L4 3.8Z" fill="#000"/></svg>
<div style="left:292px;top:55px;width:1px;height:43px;background:#d2d2d2;"></div>
<svg class="i" style="left:300px;top:53px;" width="34" height="34"><use href="#report"/></svg>
<span class="t" style="left:300px;top:84.5px;color:#000;letter-spacing:-0.169px;">Report</span>
<svg class="i" style="left:353.4px;top:53.2px;" width="31.6" height="31.6"><use href="#etichette"/></svg>
<span class="t" style="left:346px;top:84.5px;color:#000;letter-spacing:-0.075px;">Etichette</span>
<svg class="i" style="left:406px;top:53px;" width="32" height="32"><use href="#rss"/></svg>
<span class="t" style="left:403px;top:84.5px;color:#000;letter-spacing:0.045px;">Notizie</span>
<svg class="i" style="left:448.5px;top:75px" width="8" height="4"><path d="M0.3 0H7.7L4 3.8Z" fill="#000"/></svg>
<div style="left:461px;top:55px;width:1px;height:43px;background:#d2d2d2;"></div>
<svg class="i" style="left:468px;top:54px;" width="30" height="30"><use href="#salva"/></svg>
<span class="t" style="left:469px;top:84.5px;color:#000;letter-spacing:-0.603px;">Salva</span>
<svg class="i" style="left:518px;top:52.5px;" width="33" height="33"><use href="#salvatutto"/></svg>
<span class="t" style="left:507px;top:84.5px;color:#000;letter-spacing:-0.061px;">Salva tutto</span>
<div style="left:572px;top:55px;width:1px;height:43px;background:#d2d2d2;"></div>
<svg class="i" style="left:584px;top:53.5px;" width="22" height="32"><use href="#taglia"/></svg>
<span class="t" style="left:580.3px;top:84.5px;color:#8c8c8c;letter-spacing:-0.06px;">Taglia</span>
<svg class="i" style="left:622.5px;top:53.5px;" width="29" height="31"><use href="#copia"/></svg>
<span class="t" style="left:621px;top:84.5px;color:#8c8c8c;letter-spacing:-0.272px;">Copia</span>
<svg class="i" style="left:666.5px;top:53px;" width="29" height="31"><use href="#incolla"/></svg>
<span class="t" style="left:663px;top:84.5px;color:#8c8c8c;letter-spacing:0.045px;">Incolla</span>
<div style="left:707px;top:55px;width:1px;height:43px;background:#d2d2d2;"></div>
<svg class="i" style="left:723px;top:57.5px;" width="23" height="23"><use href="#elimina"/></svg>
<span class="t" style="left:715px;top:84.5px;color:#8c8c8c;letter-spacing:-0.194px;">Elimina</span>
<svg class="i" style="left:773px;top:55px;" width="32" height="30"><use href="#proprieta"/></svg>
<span class="t" style="left:765px;top:84.5px;color:#8c8c8c;letter-spacing:-0.076px;">Proprietà</span>
<div style="left:822px;top:55px;width:1px;height:43px;background:#d2d2d2;"></div>
<svg class="i" style="left:841.4px;top:53px;" width="30" height="32"><use href="#anteprima"/></svg>
<span class="t" style="left:830px;top:84.5px;color:#000;letter-spacing:0.035px;">Anteprima</span>
<svg class="i" style="left:900.5px;top:54.5px;" width="32" height="30"><use href="#stampa"/></svg>
<span class="t" style="left:896.5px;top:84.5px;color:#000;letter-spacing:-0.391px;">Stampa</span>
<svg class="i" style="left:951.8px;top:54px;" width="33" height="30.6"><use href="#esporta"/></svg>
<span class="t" style="left:948px;top:84.5px;color:#000;letter-spacing:-0.335px;">Esporta</span>
<svg class="i" style="left:1008px;top:57.5px;" width="32" height="24"><use href="#condividi"/></svg>
<span class="t" style="left:998px;top:84.5px;color:#000;letter-spacing:0.069px;">Condividi</span>
<div style="left:1883px;top:53px;width:30px;height:30px;background:#f0f0f0;border:1px solid #000;"></div>
<span class="t" style="left:1890px;top:61.0px;color:#000;font-size:11px;letter-spacing:0px;">-18</span>
<span class="t" style="left:1883.5px;top:84.5px;color:#000;letter-spacing:0.167px;">Attiva</span>
<div style="left:0px;top:104px;width:1920px;height:911px;background:#2d2d30;"></div>
<div style="left:0px;top:1015px;width:1920px;height:25px;background:#f3f4f6;"></div>
<div style="left:6px;top:110px;width:469px;height:21px;background:#2d2d30;border:1px solid #3f3f46;border-bottom:none;"></div>
<span class="t" style="left:11px;top:113.5px;color:#d6d6d6;letter-spacing:0.071px;">Documenti</span>
<div style="left:73px;top:118px;width:348px;height:7px;background:linear-gradient(90deg,#47474b 1px,transparent 1px) 0 1px/4px 1px repeat-x,linear-gradient(90deg,#47474b 1px,transparent 1px) 2px 3px/4px 1px repeat-x,linear-gradient(90deg,#47474b 1px,transparent 1px) 0 5px/4px 1px repeat-x;"></div>
<svg class="i" style="left:428px;top:119px" width="8" height="5"><path d="M0 0H8L4 4.5Z" fill="#fff"/></svg>
<svg class="i" style="left:444.5px;top:116px" width="8" height="12"><path d="M2 0.5H6V6.5H2Z M0.5 6.5H7.5 M4 6.5V11.5 M5 0.5V6.5" fill="none" stroke="#fff" stroke-width="1"/></svg>
<svg class="i" style="left:460.5px;top:117px" width="10" height="9"><path d="M0.7 0.5L9.3 8.5M9.3 0.5L0.7 8.5" stroke="#fff" stroke-width="1.3"/></svg>
<div style="left:7px;top:132px;width:469px;height:25px;background:#f3f4f6;"></div>
<div style="left:10px;top:136px;width:2px;height:14px;background-image:repeating-linear-gradient(#a8a8a8 0 2px,transparent 2px 4px);"></div>
<svg class="i" style="left:18px;top:136px;" width="16" height="16"><use href="#add16"/></svg>
<span class="t" style="left:37px;top:136.0px;color:#000;letter-spacing:0.287px;">Aggiungi</span>
<svg class="i" style="left:94px;top:138px;" width="16" height="14"><use href="#folder"/></svg>
<span class="t" style="left:113px;top:136.0px;color:#000;letter-spacing:0.071px;">Documenti</span>
<svg class="i" style="left:181px;top:142.5px" width="7" height="4"><path d="M0 0H7L3.5 3.6Z" fill="#000"/></svg>
<div style="left:7px;top:157px;width:469px;height:634px;background:#fff;"></div>
<span class="t" style="left:12px;top:159.0px;color:#000;letter-spacing:-0.004px;">Nome</span>
<div style="left:419px;top:158px;width:1px;height:18px;background:#e2e2e2;"></div>
<span class="t" style="left:425px;top:159.0px;color:#000;letter-spacing:-0.086px;">Dati</span>
<div style="left:7px;top:249px;width:469px;height:18px;background:#e5ebfa;"></div>
<div style="left:37px;top:193.5px;width:1px;height:154.0px;background-image:repeating-linear-gradient(#9a9a9a 0 1px,transparent 1px 2px);"></div>
<div style="left:56px;top:211.5px;width:1px;height:78.0px;background-image:repeating-linear-gradient(#9a9a9a 0 1px,transparent 1px 2px);"></div>
<div style="left:75px;top:229.5px;width:1px;height:6.0px;background-image:repeating-linear-gradient(#9a9a9a 0 1px,transparent 1px 2px);"></div>
<div style="left:94px;top:247.5px;width:1px;height:10.0px;background-image:repeating-linear-gradient(#9a9a9a 0 1px,transparent 1px 2px);"></div>
<div style="left:23.5px;top:185px;width:6.5px;height:1px;background-image:repeating-linear-gradient(90deg,#9a9a9a 0 1px,transparent 1px 2px);"></div>
<svg class="i" style="left:14.0px;top:181.0px" width="9" height="9"><rect x="0.5" y="0.5" width="8" height="8" rx="1.2" fill="url(#eg)" stroke="#969696"/><path d="M2.5 4.5H6.5" stroke="#2c4ea3" stroke-width="1"/></svg>
<svg class="i" style="left:31px;top:177.5px;" width="16" height="16"><use href="#factory"/></svg>
<span class="t" style="left:51.5px;top:177.5px;color:#000;letter-spacing:-0.185px;">Certifico Srl - IT</span>
<div style="left:42.5px;top:203px;width:6.5px;height:1px;background-image:repeating-linear-gradient(90deg,#9a9a9a 0 1px,transparent 1px 2px);"></div>
<svg class="i" style="left:33.0px;top:199.0px" width="9" height="9"><rect x="0.5" y="0.5" width="8" height="8" rx="1.2" fill="url(#eg)" stroke="#969696"/><path d="M2.5 4.5H6.5" stroke="#2c4ea3" stroke-width="1"/></svg>
<svg class="i" style="left:50px;top:198.0px;" width="16" height="13.6"><use href="#folder"/></svg>
<span class="t" style="left:70px;top:195.5px;color:#000;letter-spacing:-0.338px;">Relazioni ADR</span>
<div style="left:61px;top:221px;width:7px;height:1px;background-image:repeating-linear-gradient(90deg,#9a9a9a 0 1px,transparent 1px 2px);"></div>
<svg class="i" style="left:51.5px;top:217.0px" width="9" height="9"><rect x="0.5" y="0.5" width="8" height="8" rx="1.2" fill="url(#eg)" stroke="#969696"/><path d="M2.5 4.5H6.5" stroke="#2c4ea3" stroke-width="1"/></svg>
<svg class="i" style="left:69px;top:216.0px;" width="16" height="13.6"><use href="#folder"/></svg>
<span class="t" style="left:89px;top:213.5px;color:#000;letter-spacing:-0.201px;">Relazioni iniziali ADR</span>
<div style="left:80px;top:239px;width:7px;height:1px;background-image:repeating-linear-gradient(90deg,#9a9a9a 0 1px,transparent 1px 2px);"></div>
<svg class="i" style="left:70.5px;top:235.0px" width="9" height="9"><rect x="0.5" y="0.5" width="8" height="8" rx="1.2" fill="url(#eg)" stroke="#969696"/><path d="M2.5 4.5H6.5" stroke="#2c4ea3" stroke-width="1"/></svg>
<svg class="i" style="left:88px;top:231.5px;" width="15" height="16"><use href="#doclist"/></svg>
<span class="t" style="left:108px;top:231.5px;color:#000;letter-spacing:-0.296px;">RAI/2019-0001 (rev. 00)</span>
<div style="left:93.5px;top:257px;width:12.5px;height:1px;background-image:repeating-linear-gradient(90deg,#9a9a9a 0 1px,transparent 1px 2px);"></div>
<svg class="i" style="left:107px;top:250.0px;" width="15" height="15"><use href="#it"/></svg>
<span class="t" style="left:127px;top:249.5px;color:#000;letter-spacing:-0.021px;">Italiano (Italia)</span>
<div style="left:56px;top:275px;width:12px;height:1px;background-image:repeating-linear-gradient(90deg,#9a9a9a 0 1px,transparent 1px 2px);"></div>
<svg class="i" style="left:69px;top:270.0px;" width="16" height="13.6"><use href="#folder"/></svg>
<span class="t" style="left:89px;top:267.5px;color:#000;letter-spacing:-0.211px;">Relazioni annuali ADR</span>
<div style="left:61px;top:293px;width:7px;height:1px;background-image:repeating-linear-gradient(90deg,#9a9a9a 0 1px,transparent 1px 2px);"></div>
<svg class="i" style="left:51.5px;top:289.0px" width="9" height="9"><rect x="0.5" y="0.5" width="8" height="8" rx="1.2" fill="url(#eg)" stroke="#969696"/><path d="M2.5 4.5H6.5M4.5 2.5V6.5" stroke="#2c4ea3" stroke-width="1"/></svg>
<svg class="i" style="left:69px;top:288.0px;" width="16" height="13.6"><use href="#folder"/></svg>
<span class="t" style="left:89px;top:285.5px;color:#000;letter-spacing:-0.201px;">Relazioni straordinarie ADR</span>
<div style="left:42.5px;top:311px;width:6.5px;height:1px;background-image:repeating-linear-gradient(90deg,#9a9a9a 0 1px,transparent 1px 2px);"></div>
<svg class="i" style="left:33.0px;top:307.0px" width="9" height="9"><rect x="0.5" y="0.5" width="8" height="8" rx="1.2" fill="url(#eg)" stroke="#969696"/><path d="M2.5 4.5H6.5M4.5 2.5V6.5" stroke="#2c4ea3" stroke-width="1"/></svg>
<svg class="i" style="left:50px;top:306.0px;" width="16" height="13.6"><use href="#folder"/></svg>
<span class="t" style="left:70px;top:303.5px;color:#000;letter-spacing:-0.091px;">Relazioni incidente</span>
<div style="left:42.5px;top:329px;width:6.5px;height:1px;background-image:repeating-linear-gradient(90deg,#9a9a9a 0 1px,transparent 1px 2px);"></div>
<svg class="i" style="left:33.0px;top:325.0px" width="9" height="9"><rect x="0.5" y="0.5" width="8" height="8" rx="1.2" fill="url(#eg)" stroke="#969696"/><path d="M2.5 4.5H6.5M4.5 2.5V6.5" stroke="#2c4ea3" stroke-width="1"/></svg>
<svg class="i" style="left:50px;top:324.0px;" width="16" height="13.6"><use href="#folder"/></svg>
<span class="t" style="left:70px;top:321.5px;color:#000;letter-spacing:-0.151px;">Procedure</span>
<div style="left:42.5px;top:347px;width:6.5px;height:1px;background-image:repeating-linear-gradient(90deg,#9a9a9a 0 1px,transparent 1px 2px);"></div>
<svg class="i" style="left:33.0px;top:343.0px" width="9" height="9"><rect x="0.5" y="0.5" width="8" height="8" rx="1.2" fill="url(#eg)" stroke="#969696"/><path d="M2.5 4.5H6.5M4.5 2.5V6.5" stroke="#2c4ea3" stroke-width="1"/></svg>
<svg class="i" style="left:50px;top:342.0px;" width="16" height="13.6"><use href="#folder"/></svg>
<span class="t" style="left:70px;top:339.5px;color:#000;letter-spacing:0.071px;">Documenti</span>
<span class="t" style="left:425px;top:176.5px;color:#c4c4c4;letter-spacing:-0.413px;width:51px;overflow:hidden;">(+3907559</span>
<div style="left:7px;top:791px;width:469px;height:15px;background:#f0f0f0;"></div>
<div style="left:24px;top:791px;width:370px;height:15px;background:#cdcdcd;"></div>
<svg class="i" style="left:12px;top:794px" width="6" height="9"><path d="M5 0.8L1.4 4.5L5 8.2" fill="none" stroke="#555" stroke-width="1.6"/></svg>
<svg class="i" style="left:464px;top:794px" width="6" height="9"><path d="M1 0.8L4.6 4.5L1 8.2" fill="none" stroke="#555" stroke-width="1.6"/></svg>
<div style="left:7px;top:806px;width:469px;height:1px;background:#fff;"></div>
<span class="t" style="left:11px;top:809.5px;color:#d6d6d6;letter-spacing:-0.036px;">Anagrafica</span>
<span class="t" style="left:80px;top:809.5px;color:#d6d6d6;letter-spacing:-0.224px;">Eventi</span>
<div style="left:119px;top:807px;width:70px;height:19px;background:#252526;border:1px solid #3f3f46;border-top:none;"></div>
<span class="t" style="left:124.3px;top:809.5px;color:#0097fb;letter-spacing:0.071px;">Documenti</span>
<div style="left:6px;top:833px;width:469px;height:21px;background:#2d2d30;border:1px solid #3f3f46;border-bottom:none;"></div>
<span class="t" style="left:11px;top:836.5px;color:#d6d6d6;letter-spacing:0.053px;">Informazioni</span>
<div style="left:82px;top:841px;width:354px;height:7px;background:linear-gradient(90deg,#47474b 1px,transparent 1px) 0 1px/4px 1px repeat-x,linear-gradient(90deg,#47474b 1px,transparent 1px) 2px 3px/4px 1px repeat-x,linear-gradient(90deg,#47474b 1px,transparent 1px) 0 5px/4px 1px repeat-x;"></div>
<svg class="i" style="left:444.5px;top:839px" width="8" height="12"><path d="M2 0.5H6V6.5H2Z M0.5 6.5H7.5 M4 6.5V11.5 M5 0.5V6.5" fill="none" stroke="#fff" stroke-width="1"/></svg>
<svg class="i" style="left:460.5px;top:840px" width="10" height="9"><path d="M0.7 0.5L9.3 8.5M9.3 0.5L0.7 8.5" stroke="#fff" stroke-width="1.3"/></svg>
<div style="left:7px;top:855px;width:469px;height:153px;background:#fff;"></div>
<div style="left:483px;top:110px;width:137px;height:19px;background:#007acc;"></div>
<span class="t" style="left:507px;top:111.5px;color:#fff;letter-spacing:-0.362px;">RAI/2019-0001</span>
<svg class="i" style="left:604.5px;top:115.5px" width="10" height="9"><path d="M0.7 0.5L9.3 8.5M9.3 0.5L0.7 8.5" stroke="#cfe6f7" stroke-width="1.3"/></svg>
<div style="left:483px;top:129px;width:1431px;height:2px;background:#007acc;"></div>
<svg class="i" style="left:1899px;top:120px" width="9" height="5"><path d="M0 0H9L4.5 4.6Z" fill="#fff"/></svg>
<div style="left:484px;top:131px;width:560px;height:25px;background:#f3f4f6;"></div>
<div style="left:488px;top:135px;width:2px;height:14px;background-image:repeating-linear-gradient(#a8a8a8 0 2px,transparent 2px 4px);"></div>
<svg class="i" style="left:495px;top:134.5px;" width="16" height="16"><use href="#addnote"/></svg>
<span class="t" style="left:514px;top:135.0px;color:#8c8c8c;letter-spacing:0.202px;">Aggiungi nota</span>
<svg class="i" style="left:599.5px;top:136px;" width="13" height="13"><use href="#xgrey"/></svg>
<span class="t" style="left:617px;top:135.0px;color:#8c8c8c;letter-spacing:-0.003px;">Rimuovi nota</span>
<div style="left:697px;top:134px;width:1px;height:18px;background:#d2d2d2;"></div>
<svg class="i" style="left:702px;top:135px;" width="17" height="16"><use href="#valori2"/></svg>
<span class="t" style="left:721.5px;top:135.0px;color:#000;letter-spacing:0.102px;">Valori predefiniti</span>
<div style="left:1029px;top:131px;width:20px;height:877px;background:#f0f0f0;"></div>
<div style="left:1029px;top:131px;width:15px;height:25px;background:#f3f4f6;"></div>
<div style="left:484px;top:156px;width:545px;height:836px;background:#fff;"></div>
<span class="t" style="left:489px;top:158.0px;color:#000;letter-spacing:-0.227px;">Pagina</span>
<div style="left:850px;top:157px;width:1px;height:18px;background:#e2e2e2;"></div>
<span class="t" style="left:856px;top:158.0px;color:#000;letter-spacing:-0.086px;">Dati</span>
<div style="left:850px;top:176px;width:1px;height:816px;background:#eef2fb;"></div>
<div style="left:484px;top:156px;width:545px;height:836px;overflow:hidden;"><div style="left:0px;top:52px;width:545px;height:1px;background:#eef2fb;"></div><div style="left:0px;top:84px;width:545px;height:1px;background:#eef2fb;"></div><div style="left:0px;top:116px;width:545px;height:1px;background:#eef2fb;"></div><div style="left:0px;top:148px;width:545px;height:1px;background:#eef2fb;"></div><div style="left:0px;top:180px;width:545px;height:1px;background:#eef2fb;"></div><div style="left:0px;top:212px;width:545px;height:1px;background:#eef2fb;"></div><div style="left:0px;top:244px;width:545px;height:1px;background:#eef2fb;"></div><div style="left:0px;top:276px;width:545px;height:1px;background:#eef2fb;"></div><div style="left:0px;top:308px;width:545px;height:1px;background:#eef2fb;"></div><div style="left:0px;top:340px;width:545px;height:1px;background:#eef2fb;"></div><div style="left:0px;top:372px;width:545px;height:1px;background:#eef2fb;"></div><div style="left:0px;top:404px;width:545px;height:1px;background:#eef2fb;"></div><div style="left:0px;top:436px;width:545px;height:1px;background:#eef2fb;"></div><div style="left:0px;top:468px;width:545px;height:1px;background:#eef2fb;"></div><div style="left:0px;top:500px;width:545px;height:1px;background:#eef2fb;"></div><div style="left:0px;top:532px;width:545px;height:1px;background:#eef2fb;"></div><div style="left:0px;top:564px;width:545px;height:1px;background:#eef2fb;"></div><div style="left:0px;top:596px;width:545px;height:1px;background:#eef2fb;"></div><div style="left:0px;top:628px;width:545px;height:1px;background:#eef2fb;"></div><div style="left:0px;top:660px;width:545px;height:1px;background:#eef2fb;"></div><div style="left:0px;top:692px;width:545px;height:1px;background:#eef2fb;"></div><div style="left:0px;top:788px;width:545px;height:1px;background:#eef2fb;"></div><div style="left:0px;top:820px;width:545px;height:1px;background:#eef2fb;"></div><svg class="i" style="left:81px;top:24.0px;" width="21" height="24"><use href="#note"/></svg><span class="t" style="left:108.5px;top:27.5px;color:#000;letter-spacing:-0.594px;">ADR 1.8.3</span><span class="t" style="left:371px;top:20.0px;color:#c4c4c4;letter-spacing:-0.594px;">ADR 1.8.3</span><svg class="i" style="left:35.0px;top:63.5px" width="9" height="9"><rect x="0.5" y="0.5" width="8" height="8" rx="1.2" fill="url(#eg)" stroke="#969696"/><path d="M2.5 4.5H6.5" stroke="#2c4ea3" stroke-width="1"/></svg><svg class="i" style="left:52px;top:58.5px;" width="24" height="20"><use href="#folder"/></svg><span class="t" style="left:80.20000000000005px;top:59.5px;color:#000;letter-spacing:-0.577px;">1. Premessa</span><svg class="i" style="left:81px;top:88.0px;" width="24" height="24"><use href="#notepen"/></svg><span class="t" style="left:108.5px;top:91.5px;color:#000;letter-spacing:-0.002px;">Nota del consulente</span><svg class="i" style="left:52px;top:120.0px;" width="24" height="24"><use href="#factory"/></svg><span class="t" style="left:80.20000000000005px;top:123.5px;color:#000;letter-spacing:-0.246px;">2. Dati impresa</span><svg class="i" style="left:35.0px;top:159.5px" width="9" height="9"><rect x="0.5" y="0.5" width="8" height="8" rx="1.2" fill="url(#eg)" stroke="#969696"/><path d="M2.5 4.5H6.5" stroke="#2c4ea3" stroke-width="1"/></svg><svg class="i" style="left:52px;top:154.5px;" width="24" height="20"><use href="#folder"/></svg><span class="t" style="left:80.20000000000005px;top:155.5px;color:#000;letter-spacing:-0.05px;">2.4. Attività dell'impresa inerenti le merci pericolose</span><svg class="i" style="left:81px;top:184.0px;" width="24" height="24"><use href="#notepen"/></svg><span class="t" style="left:108.5px;top:187.5px;color:#000;letter-spacing:-0.002px;">Nota del consulente</span><svg class="i" style="left:35.0px;top:223.5px" width="9" height="9"><rect x="0.5" y="0.5" width="8" height="8" rx="1.2" fill="url(#eg)" stroke="#969696"/><path d="M2.5 4.5H6.5M4.5 2.5V6.5" stroke="#2c4ea3" stroke-width="1"/></svg><svg class="i" style="left:52px;top:216.0px;" width="24" height="24"><use href="#merci"/></svg><span class="t" style="left:80.20000000000005px;top:219.5px;color:#000;letter-spacing:-0.09px;">3. Merci pericolose</span><svg class="i" style="left:35.0px;top:255.5px" width="9" height="9"><rect x="0.5" y="0.5" width="8" height="8" rx="1.2" fill="url(#eg)" stroke="#969696"/><path d="M2.5 4.5H6.5" stroke="#2c4ea3" stroke-width="1"/></svg><svg class="i" style="left:52px;top:253.0px;" width="24" height="20"><use href="#truck"/></svg><span class="t" style="left:80.20000000000005px;top:251.5px;color:#000;letter-spacing:-0.103px;">4. Veicoli</span><svg class="i" style="left:81px;top:280.0px;" width="24" height="24"><use href="#notepen"/></svg><span class="t" style="left:108.5px;top:283.5px;color:#000;letter-spacing:-0.002px;">Nota del consulente</span><svg class="i" style="left:81px;top:312.0px;" width="21" height="24"><use href="#note"/></svg><span class="t" style="left:108.5px;top:315.5px;color:#000;letter-spacing:0.164px;">Note</span><span class="t" style="left:371px;top:308.0px;color:#c4c4c4;letter-spacing:0.164px;">Note</span><svg class="i" style="left:35.0px;top:351.5px" width="9" height="9"><rect x="0.5" y="0.5" width="8" height="8" rx="1.2" fill="url(#eg)" stroke="#969696"/><path d="M2.5 4.5H6.5" stroke="#2c4ea3" stroke-width="1"/></svg><svg class="i" style="left:52px;top:344.0px;" width="24" height="24"><use href="#barrel"/></svg><span class="t" style="left:80.20000000000005px;top:347.5px;color:#000;letter-spacing:-0.179px;">5. Imballaggi ADR</span><svg class="i" style="left:81px;top:376.0px;" width="24" height="24"><use href="#notepen"/></svg><span class="t" style="left:108.5px;top:379.5px;color:#000;letter-spacing:-0.002px;">Nota del consulente</span><svg class="i" style="left:81px;top:408.0px;" width="21" height="24"><use href="#note"/></svg><span class="t" style="left:108.5px;top:411.5px;color:#000;letter-spacing:0.164px;">Note</span><span class="t" style="left:371px;top:404.0px;color:#c4c4c4;letter-spacing:-0.14px;">1.2.1 Definizioni</span><svg class="i" style="left:35.0px;top:447.5px" width="9" height="9"><rect x="0.5" y="0.5" width="8" height="8" rx="1.2" fill="url(#eg)" stroke="#969696"/><path d="M2.5 4.5H6.5" stroke="#2c4ea3" stroke-width="1"/></svg><svg class="i" style="left:52px;top:440.0px;" width="24" height="24"><use href="#worker"/></svg><span class="t" style="left:80.20000000000005px;top:443.5px;color:#000;letter-spacing:-0.152px;">6. Personale impiegato in mansioni ADR</span><svg class="i" style="left:81px;top:472.0px;" width="24" height="24"><use href="#notepen"/></svg><span class="t" style="left:108.5px;top:475.5px;color:#000;letter-spacing:-0.002px;">Nota del consulente</span><svg class="i" style="left:81px;top:504.0px;" width="21" height="24"><use href="#note"/></svg><span class="t" style="left:108.5px;top:507.5px;color:#000;letter-spacing:0.164px;">Note</span><span class="t" style="left:371px;top:500.0px;color:#c4c4c4;letter-spacing:-0.14px;">1.2.1 Definizioni</span><svg class="i" style="left:35.0px;top:543.5px" width="9" height="9"><rect x="0.5" y="0.5" width="8" height="8" rx="1.2" fill="url(#eg)" stroke="#969696"/><path d="M2.5 4.5H6.5M4.5 2.5V6.5" stroke="#2c4ea3" stroke-width="1"/></svg><svg class="i" style="left:52px;top:536.0px;" width="24" height="24"><use href="#registro"/></svg><span class="t" style="left:80.20000000000005px;top:539.5px;color:#000;letter-spacing:-0.106px;">7. Registro formazione operatori</span><svg class="i" style="left:35.0px;top:575.5px" width="9" height="9"><rect x="0.5" y="0.5" width="8" height="8" rx="1.2" fill="url(#eg)" stroke="#969696"/><path d="M2.5 4.5H6.5" stroke="#2c4ea3" stroke-width="1"/></svg><svg class="i" style="left:52px;top:570.5px;" width="24" height="20"><use href="#folder"/></svg><span class="t" style="left:80.20000000000005px;top:571.5px;color:#000;letter-spacing:-0.234px;">8. Descrizione prassi e procedure</span><svg class="i" style="left:81px;top:600.0px;" width="24" height="24"><use href="#notepen"/></svg><span class="t" style="left:108.5px;top:603.5px;color:#000;letter-spacing:-0.002px;">Nota del consulente</span><svg class="i" style="left:35.0px;top:639.5px" width="9" height="9"><rect x="0.5" y="0.5" width="8" height="8" rx="1.2" fill="url(#eg)" stroke="#969696"/><path d="M2.5 4.5H6.5M4.5 2.5V6.5" stroke="#2c4ea3" stroke-width="1"/></svg><svg class="i" style="left:52px;top:632.0px;" width="24" height="24"><use href="#controlli"/></svg><span class="t" style="left:80.20000000000005px;top:635.5px;color:#000;letter-spacing:-0.025px;">9. Controlli documentali/prassi e procedure</span><svg class="i" style="left:35.0px;top:671.5px" width="9" height="9"><rect x="0.5" y="0.5" width="8" height="8" rx="1.2" fill="url(#eg)" stroke="#969696"/><path d="M2.5 4.5H6.5M4.5 2.5V6.5" stroke="#2c4ea3" stroke-width="1"/></svg><svg class="i" style="left:52px;top:664.0px;" width="24" height="24"><use href="#incidenti"/></svg><span class="t" style="left:80.20000000000005px;top:667.5px;color:#000;letter-spacing:-0.117px;">10. Incidenti/Emergenze/Sanzioni</span><svg class="i" style="left:35.0px;top:703.5px" width="9" height="9"><rect x="0.5" y="0.5" width="8" height="8" rx="1.2" fill="url(#eg)" stroke="#969696"/><path d="M2.5 4.5H6.5M4.5 2.5V6.5" stroke="#2c4ea3" stroke-width="1"/></svg><svg class="i" style="left:52px;top:698.5px;" width="24" height="20"><use href="#folder"/></svg><span class="t" style="left:80.20000000000005px;top:699.5px;color:#000;letter-spacing:-0.195px;">11. Gestione e verifica prassi e procedure</span><div style="left:0px;top:724px;width:545px;height:32px;background:#e5ebfa;"></div><div style="left:78px;top:724px;width:287px;height:31px;border:1px dotted #b9c2d6;width:286px;height:30px;"></div><div style="left:368px;top:724px;width:176px;height:31px;border:1px dotted #b9c2d6;width:175px;height:30px;"></div><svg class="i" style="left:35.0px;top:735.5px" width="9" height="9"><rect x="0.5" y="0.5" width="8" height="8" rx="1.2" fill="url(#eg)" stroke="#969696"/><path d="M2.5 4.5H6.5" stroke="#2c4ea3" stroke-width="1"/></svg><svg class="i" style="left:52px;top:728.0px;" width="24" height="24"><use href="#gestione"/></svg><span class="t" style="left:80.20000000000005px;top:731.5px;color:#000;letter-spacing:-0.178px;">11.1. Tabella gestione prassi e procedure</span><svg class="i" style="left:81px;top:760.0px;" width="21" height="24"><use href="#note"/></svg><span class="t" style="left:108.5px;top:763.5px;color:#000;letter-spacing:0.164px;">Note</span><span class="t" style="left:371px;top:756.0px;color:#c4c4c4;letter-spacing:0.164px;">Note</span><svg class="i" style="left:35.0px;top:799.5px" width="9" height="9"><rect x="0.5" y="0.5" width="8" height="8" rx="1.2" fill="url(#eg)" stroke="#969696"/><path d="M2.5 4.5H6.5M4.5 2.5V6.5" stroke="#2c4ea3" stroke-width="1"/></svg><svg class="i" style="left:52px;top:794.5px;" width="24" height="20"><use href="#folder"/></svg><span class="t" style="left:80.20000000000005px;top:795.5px;color:#000;letter-spacing:-0.024px;">12. Note finali</span><svg class="i" style="left:35.0px;top:831.5px" width="9" height="9"><rect x="0.5" y="0.5" width="8" height="8" rx="1.2" fill="url(#eg)" stroke="#969696"/><path d="M2.5 4.5H6.5M4.5 2.5V6.5" stroke="#2c4ea3" stroke-width="1"/></svg><svg class="i" style="left:52px;top:824.0px;" width="24" height="24"><use href="#person"/></svg><span class="t" style="left:80.20000000000005px;top:827.5px;color:#000;letter-spacing:-0.408px;">13. Firme</span></div>
<div style="left:1029px;top:256px;width:15px;height:691px;background:#cdcdcd;"></div>
<svg class="i" style="left:1032px;top:162px" width="9" height="6"><path d="M0.8 5L4.5 1.4L8.2 5" fill="none" stroke="#555" stroke-width="1.6"/></svg>
<svg class="i" style="left:1032px;top:980px" width="9" height="6"><path d="M0.8 1L4.5 4.6L8.2 1" fill="none" stroke="#555" stroke-width="1.6"/></svg>
<div style="left:484px;top:992px;width:545px;height:15px;background:#f0f0f0;"></div>
<div style="left:501px;top:992px;width:503px;height:15px;background:#cdcdcd;"></div>
<div style="left:484px;top:1007px;width:565px;height:1px;background:#fff;"></div>
<svg class="i" style="left:489px;top:995px" width="6" height="9"><path d="M5 0.8L1.4 4.5L5 8.2" fill="none" stroke="#555" stroke-width="1.6"/></svg>
<svg class="i" style="left:1017px;top:995px" width="6" height="9"><path d="M1 0.8L4.6 4.5L1 8.2" fill="none" stroke="#555" stroke-width="1.6"/></svg>
<div style="left:1049px;top:131px;width:863px;height:47px;background:linear-gradient(#e7ecfa 0%,#d3ddf5 45%,#b9c8ec 100%);border-left:1px solid #7d9bdb;border-bottom:1px solid #7d9bdb;"></div>
<svg class="i" style="left:1053px;top:138px;" width="32" height="32"><use href="#gestione32"/></svg>
<span class="t" style="left:1092.6px;top:137px;height:34px;line-height:34px;font-size:26.67px;letter-spacing:0.455px;color:#000;-webkit-text-stroke:0.45px #cfd9f3">11.1. Tabella gestione prassi e procedure</span>
<div style="left:1049px;top:179px;width:864px;height:25px;background:#f3f4f6;"></div>
<div style="left:1053px;top:183px;width:2px;height:14px;background-image:repeating-linear-gradient(#a8a8a8 0 2px,transparent 2px 4px);"></div>
<svg class="i" style="left:1060px;top:183px;" width="16" height="16"><use href="#add16"/></svg>
<span class="t" style="left:1079.5px;top:183.0px;color:#000;letter-spacing:0.15px;">Aggiungi riga</span>
<svg class="i" style="left:1160.5px;top:184px;" width="13" height="13"><use href="#xred"/></svg>
<span class="t" style="left:1178px;top:183.0px;color:#000;letter-spacing:-0.059px;">Rimuovi riga</span>
<div style="left:1254px;top:182px;width:1px;height:18px;background:#d2d2d2;"></div>
<svg class="i" style="left:1259.5px;top:182.6px;" width="17" height="17"><use href="#valori"/></svg>
<span class="t" style="left:1278.5px;top:183.0px;color:#000;letter-spacing:0.102px;">Valori predefiniti</span>
<div style="left:1049px;top:204px;width:864px;height:804px;background:#fff;"></div>
<div style="left:1050px;top:229px;width:47px;height:351px;background:#f9f9f9;"></div>
<div style="left:1096px;top:204px;width:1px;height:25px;background:#e6e6e6;"></div>
<div style="left:1097px;top:229px;width:1px;height:779px;background:#ebebeb;"></div>
<div style="left:1165px;top:204px;width:1px;height:25px;background:#e6e6e6;"></div>
<div style="left:1166px;top:229px;width:1px;height:779px;background:#ebebeb;"></div>
<div style="left:1292px;top:204px;width:1px;height:25px;background:#e6e6e6;"></div>
<div style="left:1293px;top:229px;width:1px;height:779px;background:#ebebeb;"></div>
<div style="left:1545px;top:204px;width:1px;height:25px;background:#e6e6e6;"></div>
<div style="left:1546px;top:229px;width:1px;height:779px;background:#ebebeb;"></div>
<div style="left:1635px;top:204px;width:1px;height:25px;background:#e6e6e6;"></div>
<div style="left:1636px;top:229px;width:1px;height:779px;background:#ebebeb;"></div>
<div style="left:1659px;top:204px;width:1px;height:25px;background:#e6e6e6;"></div>
<div style="left:1660px;top:229px;width:1px;height:779px;background:#ebebeb;"></div>
<div style="left:1683px;top:204px;width:1px;height:25px;background:#e6e6e6;"></div>
<div style="left:1684px;top:229px;width:1px;height:779px;background:#ebebeb;"></div>
<div style="left:1707px;top:204px;width:1px;height:25px;background:#e6e6e6;"></div>
<div style="left:1708px;top:229px;width:1px;height:779px;background:#ebebeb;"></div>
<div style="left:1731px;top:204px;width:1px;height:25px;background:#e6e6e6;"></div>
<div style="left:1732px;top:229px;width:1px;height:779px;background:#ebebeb;"></div>
<div style="left:1755px;top:204px;width:1px;height:25px;background:#e6e6e6;"></div>
<div style="left:1756px;top:229px;width:1px;height:779px;background:#ebebeb;"></div>
<div style="left:1833px;top:204px;width:1px;height:25px;background:#e6e6e6;"></div>
<div style="left:1834px;top:229px;width:1px;height:779px;background:#ebebeb;"></div>
<div style="left:1911px;top:204px;width:1px;height:25px;background:#e6e6e6;"></div>
<div style="left:1912px;top:229px;width:1px;height:779px;background:#ebebeb;"></div>
<div style="left:1050px;top:255px;width:863px;height:1px;background:#ebebeb;"></div>
<div style="left:1050px;top:282px;width:863px;height:1px;background:#ebebeb;"></div>
<div style="left:1050px;top:309px;width:863px;height:1px;background:#ebebeb;"></div>
<div style="left:1050px;top:336px;width:863px;height:1px;background:#ebebeb;"></div>
<div style="left:1050px;top:363px;width:863px;height:1px;background:#ebebeb;"></div>
<div style="left:1050px;top:390px;width:863px;height:1px;background:#ebebeb;"></div>
<div style="left:1050px;top:417px;width:863px;height:1px;background:#ebebeb;"></div>
<div style="left:1050px;top:444px;width:863px;height:1px;background:#ebebeb;"></div>
<div style="left:1050px;top:471px;width:863px;height:1px;background:#ebebeb;"></div>
<div style="left:1050px;top:498px;width:863px;height:1px;background:#ebebeb;"></div>
<div style="left:1050px;top:525px;width:863px;height:1px;background:#ebebeb;"></div>
<div style="left:1050px;top:552px;width:863px;height:1px;background:#ebebeb;"></div>
<div style="left:1050px;top:579px;width:863px;height:1px;background:#ebebeb;"></div>
<div style="left:1050px;top:606px;width:863px;height:1px;background:#ebebeb;"></div>
<div style="left:1050px;top:633px;width:863px;height:1px;background:#ebebeb;"></div>
<div style="left:1050px;top:660px;width:863px;height:1px;background:#ebebeb;"></div>
<div style="left:1050px;top:687px;width:863px;height:1px;background:#ebebeb;"></div>
<div style="left:1050px;top:714px;width:863px;height:1px;background:#ebebeb;"></div>
<div style="left:1050px;top:741px;width:863px;height:1px;background:#ebebeb;"></div>
<div style="left:1050px;top:768px;width:863px;height:1px;background:#ebebeb;"></div>
<div style="left:1050px;top:795px;width:863px;height:1px;background:#ebebeb;"></div>
<div style="left:1050px;top:822px;width:863px;height:1px;background:#ebebeb;"></div>
<div style="left:1050px;top:849px;width:863px;height:1px;background:#ebebeb;"></div>
<div style="left:1050px;top:876px;width:863px;height:1px;background:#ebebeb;"></div>
<div style="left:1050px;top:903px;width:863px;height:1px;background:#ebebeb;"></div>
<div style="left:1050px;top:930px;width:863px;height:1px;background:#ebebeb;"></div>
<div style="left:1050px;top:957px;width:863px;height:1px;background:#ebebeb;"></div>
<div style="left:1050px;top:984px;width:863px;height:1px;background:#ebebeb;"></div>
<span class="t" style="left:1055.5px;top:208.5px;color:#000;letter-spacing:-0.003px;">Ordine</span>
<span class="t" style="left:1103.5px;top:208.5px;color:#000;letter-spacing:0.0px;">n.</span>
<span class="t" style="left:1173.5px;top:208.5px;color:#000;letter-spacing:-0.203px;">Operazione</span>
<span class="t" style="left:1299.5px;top:208.5px;color:#000;letter-spacing:-0.261px;">Prassi e procedura</span>
<span class="t" style="left:1552px;top:208.5px;color:#000;letter-spacing:-0.192px;">Rif. Procedura</span>
<span class="t" style="left:1642px;top:208.5px;color:#000;letter-spacing:0.0px;">A</span>
<span class="t" style="left:1666px;top:208.5px;color:#000;letter-spacing:0.0px;">N.</span>
<span class="t" style="left:1690px;top:208.5px;color:#000;letter-spacing:-1.0px;">V</span>
<span class="t" style="left:1714px;top:208.5px;color:#000;letter-spacing:0.0px;">N.</span>
<span class="t" style="left:1738.5px;top:208.5px;color:#000;letter-spacing:1.0px;">M</span>
<span class="t" style="left:1762.5px;top:208.5px;color:#000;letter-spacing:-0.179px;">Data attua...</span>
<span class="t" style="left:1840px;top:208.5px;color:#000;letter-spacing:-0.13px;">Data verifica</span>
<svg class="i" style="left:1069px;top:205px" width="9" height="5"><path d="M0.6 4.4L4.5 0.8L8.4 4.4" fill="none" stroke="#6a6a6a" stroke-width="1"/></svg>
<svg class="i" style="left:1052px;top:230px;" width="24" height="24"><use href="#gestione"/></svg>
<span class="t" style="left:1079.5px;top:234.5px;color:#000;letter-spacing:-0.672px;">1</span>
<span class="t" style="left:1100px;top:234.5px;color:#000;letter-spacing:-0.672px;">01</span>
<span class="t" style="left:1170px;top:234.5px;color:#000;letter-spacing:-0.068px;">Identificazione delle ...</span>
<span class="t" style="left:1296.5px;top:234.5px;color:#000;letter-spacing:-0.107px;">Corrette procedure volte a far rispettare le no...</span>
<div style="left:1641px;top:236px;width:11px;height:11px;background:#fff;border:1px solid #333;"></div>
<div style="left:1665px;top:236px;width:11px;height:11px;background:#fff;border:1px solid #333;"></div>
<div style="left:1689px;top:236px;width:11px;height:11px;background:#fff;border:1px solid #333;"></div>
<div style="left:1713px;top:236px;width:11px;height:11px;background:#fff;border:1px solid #333;"></div>
<div style="left:1737px;top:236px;width:11px;height:11px;background:#fff;border:1px solid #333;"></div>
<svg class="i" style="left:1052px;top:257px;" width="24" height="24"><use href="#gestione"/></svg>
<span class="t" style="left:1079.5px;top:261.5px;color:#000;letter-spacing:-0.672px;">2</span>
<span class="t" style="left:1100px;top:261.5px;color:#000;letter-spacing:-0.672px;">02</span>
<span class="t" style="left:1170px;top:261.5px;color:#000;letter-spacing:-0.038px;">Mezzi di trasporto</span>
<span class="t" style="left:1296.5px;top:261.5px;color:#000;letter-spacing:-0.107px;">Corrette prassi dell'impresa per quanto conc...</span>
<div style="left:1641px;top:263px;width:11px;height:11px;background:#fff;border:1px solid #333;"></div>
<div style="left:1665px;top:263px;width:11px;height:11px;background:#fff;border:1px solid #333;"></div>
<div style="left:1689px;top:263px;width:11px;height:11px;background:#fff;border:1px solid #333;"></div>
<div style="left:1713px;top:263px;width:11px;height:11px;background:#fff;border:1px solid #333;"></div>
<div style="left:1737px;top:263px;width:11px;height:11px;background:#fff;border:1px solid #333;"></div>
<svg class="i" style="left:1052px;top:284px;" width="24" height="24"><use href="#gestione"/></svg>
<span class="t" style="left:1079.5px;top:288.5px;color:#000;letter-spacing:-0.672px;">3</span>
<span class="t" style="left:1100px;top:288.5px;color:#000;letter-spacing:-0.672px;">03</span>
<span class="t" style="left:1170px;top:288.5px;color:#000;letter-spacing:-0.097px;">Attrezzature carico/s...</span>
<span class="t" style="left:1296.5px;top:288.5px;color:#000;letter-spacing:-0.068px;">Controllo procedure di verifica delle attrezzat...</span>
<div style="left:1641px;top:290px;width:11px;height:11px;background:#fff;border:1px solid #333;"></div>
<div style="left:1665px;top:290px;width:11px;height:11px;background:#fff;border:1px solid #333;"></div>
<div style="left:1689px;top:290px;width:11px;height:11px;background:#fff;border:1px solid #333;"></div>
<div style="left:1713px;top:290px;width:11px;height:11px;background:#fff;border:1px solid #333;"></div>
<div style="left:1737px;top:290px;width:11px;height:11px;background:#fff;border:1px solid #333;"></div>
<svg class="i" style="left:1052px;top:311px;" width="24" height="24"><use href="#gestione"/></svg>
<span class="t" style="left:1079.5px;top:315.5px;color:#000;letter-spacing:-0.672px;">4</span>
<span class="t" style="left:1100px;top:315.5px;color:#000;letter-spacing:-0.672px;">04</span>
<span class="t" style="left:1170px;top:315.5px;color:#000;letter-spacing:-0.236px;">Formazione</span>
<span class="t" style="left:1296.5px;top:315.5px;color:#000;letter-spacing:-0.001px;">Adeguata formazione dei dipendenti dell'im...</span>
<div style="left:1641px;top:317px;width:11px;height:11px;background:#fff;border:1px solid #333;"></div>
<div style="left:1665px;top:317px;width:11px;height:11px;background:#fff;border:1px solid #333;"></div>
<div style="left:1689px;top:317px;width:11px;height:11px;background:#fff;border:1px solid #333;"></div>
<div style="left:1713px;top:317px;width:11px;height:11px;background:#fff;border:1px solid #333;"></div>
<div style="left:1737px;top:317px;width:11px;height:11px;background:#fff;border:1px solid #333;"></div>
<svg class="i" style="left:1052px;top:338px;" width="24" height="24"><use href="#gestione"/></svg>
<span class="t" style="left:1079.5px;top:342.5px;color:#000;letter-spacing:-0.672px;">5</span>
<span class="t" style="left:1100px;top:342.5px;color:#000;letter-spacing:-0.672px;">05</span>
<span class="t" style="left:1170px;top:342.5px;color:#000;letter-spacing:-0.484px;">Emergenze</span>
<span class="t" style="left:1296.5px;top:342.5px;color:#000;letter-spacing:-0.183px;">Presenti procedure d'emergenza adeguate a...</span>
<div style="left:1641px;top:344px;width:11px;height:11px;background:#fff;border:1px solid #333;"></div>
<div style="left:1665px;top:344px;width:11px;height:11px;background:#fff;border:1px solid #333;"></div>
<div style="left:1689px;top:344px;width:11px;height:11px;background:#fff;border:1px solid #333;"></div>
<div style="left:1713px;top:344px;width:11px;height:11px;background:#fff;border:1px solid #333;"></div>
<div style="left:1737px;top:344px;width:11px;height:11px;background:#fff;border:1px solid #333;"></div>
<svg class="i" style="left:1052px;top:365px;" width="24" height="24"><use href="#gestione"/></svg>
<span class="t" style="left:1079.5px;top:369.5px;color:#000;letter-spacing:-0.672px;">6</span>
<span class="t" style="left:1100px;top:369.5px;color:#000;letter-spacing:-0.672px;">06</span>
<span class="t" style="left:1170px;top:369.5px;color:#000;letter-spacing:-0.484px;">Emergenze</span>
<span class="t" style="left:1296.5px;top:369.5px;color:#000;letter-spacing:-0.25px;">Analisi e, se necessario, la redazione di relazi...</span>
<div style="left:1641px;top:371px;width:11px;height:11px;background:#fff;border:1px solid #333;"></div>
<div style="left:1665px;top:371px;width:11px;height:11px;background:#fff;border:1px solid #333;"></div>
<div style="left:1689px;top:371px;width:11px;height:11px;background:#fff;border:1px solid #333;"></div>
<div style="left:1713px;top:371px;width:11px;height:11px;background:#fff;border:1px solid #333;"></div>
<div style="left:1737px;top:371px;width:11px;height:11px;background:#fff;border:1px solid #333;"></div>
<svg class="i" style="left:1052px;top:392px;" width="24" height="24"><use href="#gestione"/></svg>
<span class="t" style="left:1079.5px;top:396.5px;color:#000;letter-spacing:-0.672px;">7</span>
<span class="t" style="left:1100px;top:396.5px;color:#000;letter-spacing:-0.672px;">07</span>
<span class="t" style="left:1170px;top:396.5px;color:#000;letter-spacing:-0.484px;">Emergenze</span>
<span class="t" style="left:1296.5px;top:396.5px;color:#000;letter-spacing:-0.15px;">Devono essere attuate di misure appropriate ...</span>
<div style="left:1641px;top:398px;width:11px;height:11px;background:#fff;border:1px solid #333;"></div>
<div style="left:1665px;top:398px;width:11px;height:11px;background:#fff;border:1px solid #333;"></div>
<div style="left:1689px;top:398px;width:11px;height:11px;background:#fff;border:1px solid #333;"></div>
<div style="left:1713px;top:398px;width:11px;height:11px;background:#fff;border:1px solid #333;"></div>
<div style="left:1737px;top:398px;width:11px;height:11px;background:#fff;border:1px solid #333;"></div>
<svg class="i" style="left:1052px;top:419px;" width="24" height="24"><use href="#gestione"/></svg>
<span class="t" style="left:1079.5px;top:423.5px;color:#000;letter-spacing:-0.672px;">8</span>
<span class="t" style="left:1100px;top:423.5px;color:#000;letter-spacing:-0.672px;">08</span>
<span class="t" style="left:1170px;top:423.5px;color:#000;letter-spacing:-0.226px;">Norme ADR</span>
<span class="t" style="left:1296.5px;top:423.5px;color:#000;letter-spacing:-0.061px;">Controllo delle disposizioni legislative e dei r...</span>
<div style="left:1641px;top:425px;width:11px;height:11px;background:#fff;border:1px solid #333;"></div>
<div style="left:1665px;top:425px;width:11px;height:11px;background:#fff;border:1px solid #333;"></div>
<div style="left:1689px;top:425px;width:11px;height:11px;background:#fff;border:1px solid #333;"></div>
<div style="left:1713px;top:425px;width:11px;height:11px;background:#fff;border:1px solid #333;"></div>
<div style="left:1737px;top:425px;width:11px;height:11px;background:#fff;border:1px solid #333;"></div>
<svg class="i" style="left:1052px;top:446px;" width="24" height="24"><use href="#gestione"/></svg>
<span class="t" style="left:1079.5px;top:450.5px;color:#000;letter-spacing:-0.672px;">9</span>
<span class="t" style="left:1100px;top:450.5px;color:#000;letter-spacing:-0.672px;">09</span>
<span class="t" style="left:1170px;top:450.5px;color:#000;letter-spacing:-0.01px;">Trasporto/carico/sca...</span>
<span class="t" style="left:1296.5px;top:450.5px;color:#000;letter-spacing:-0.074px;">Verifica che il personale incaricato del traspor...</span>
<div style="left:1641px;top:452px;width:11px;height:11px;background:#fff;border:1px solid #333;"></div>
<div style="left:1665px;top:452px;width:11px;height:11px;background:#fff;border:1px solid #333;"></div>
<div style="left:1689px;top:452px;width:11px;height:11px;background:#fff;border:1px solid #333;"></div>
<div style="left:1713px;top:452px;width:11px;height:11px;background:#fff;border:1px solid #333;"></div>
<div style="left:1737px;top:452px;width:11px;height:11px;background:#fff;border:1px solid #333;"></div>
<svg class="i" style="left:1052px;top:473px;" width="24" height="24"><use href="#gestione"/></svg>
<span class="t" style="left:1079.5px;top:477.5px;color:#000;letter-spacing:-0.672px;">10</span>
<span class="t" style="left:1100px;top:477.5px;color:#000;letter-spacing:-0.672px;">10</span>
<span class="t" style="left:1170px;top:477.5px;color:#000;letter-spacing:-0.01px;">Trasporto/carico/sca...</span>
<span class="t" style="left:1296.5px;top:477.5px;color:#000;letter-spacing:-0.09px;">Necessità dell'introduzione di misure di sensi...</span>
<div style="left:1641px;top:479px;width:11px;height:11px;background:#fff;border:1px solid #333;"></div>
<div style="left:1665px;top:479px;width:11px;height:11px;background:#fff;border:1px solid #333;"></div>
<div style="left:1689px;top:479px;width:11px;height:11px;background:#fff;border:1px solid #333;"></div>
<div style="left:1713px;top:479px;width:11px;height:11px;background:#fff;border:1px solid #333;"></div>
<div style="left:1737px;top:479px;width:11px;height:11px;background:#fff;border:1px solid #333;"></div>
<svg class="i" style="left:1052px;top:500px;" width="24" height="24"><use href="#gestione"/></svg>
<span class="t" style="left:1079.5px;top:504.5px;color:#000;letter-spacing:-0.227px;">11</span>
<span class="t" style="left:1100px;top:504.5px;color:#000;letter-spacing:-0.227px;">11</span>
<span class="t" style="left:1170px;top:504.5px;color:#000;letter-spacing:-0.01px;">Trasporto/carico/sca...</span>
<span class="t" style="left:1296.5px;top:504.5px;color:#000;letter-spacing:-0.029px;">Controllo procedure di verifica volte a garant...</span>
<div style="left:1641px;top:506px;width:11px;height:11px;background:#fff;border:1px solid #333;"></div>
<div style="left:1665px;top:506px;width:11px;height:11px;background:#fff;border:1px solid #333;"></div>
<div style="left:1689px;top:506px;width:11px;height:11px;background:#fff;border:1px solid #333;"></div>
<div style="left:1713px;top:506px;width:11px;height:11px;background:#fff;border:1px solid #333;"></div>
<div style="left:1737px;top:506px;width:11px;height:11px;background:#fff;border:1px solid #333;"></div>
<svg class="i" style="left:1052px;top:527px;" width="24" height="24"><use href="#gestione"/></svg>
<span class="t" style="left:1079.5px;top:531.5px;color:#000;letter-spacing:-0.672px;">12</span>
<span class="t" style="left:1100px;top:531.5px;color:#000;letter-spacing:-0.672px;">12</span>
<span class="t" style="left:1170px;top:531.5px;color:#000;letter-spacing:-0.01px;">Trasporto/carico/sca...</span>
<span class="t" style="left:1296.5px;top:531.5px;color:#000;letter-spacing:-0.035px;">Attuazione di procedure di verifica dell'osser...</span>
<div style="left:1641px;top:533px;width:11px;height:11px;background:#fff;border:1px solid #333;"></div>
<div style="left:1665px;top:533px;width:11px;height:11px;background:#fff;border:1px solid #333;"></div>
<div style="left:1689px;top:533px;width:11px;height:11px;background:#fff;border:1px solid #333;"></div>
<div style="left:1713px;top:533px;width:11px;height:11px;background:#fff;border:1px solid #333;"></div>
<div style="left:1737px;top:533px;width:11px;height:11px;background:#fff;border:1px solid #333;"></div>
<svg class="i" style="left:1052px;top:554px;" width="24" height="24"><use href="#gestione"/></svg>
<span class="t" style="left:1079.5px;top:558.5px;color:#000;letter-spacing:-0.672px;">13</span>
<span class="t" style="left:1100px;top:558.5px;color:#000;letter-spacing:-0.672px;">13</span>
<span class="t" style="left:1170px;top:558.5px;color:#000;letter-spacing:-0.01px;">Trasporto/carico/sca...</span>
<span class="t" style="left:1296.5px;top:558.5px;color:#000;letter-spacing:-0.147px;">Necessità dell'esistenza del piano di security ...</span>
<div style="left:1641px;top:560px;width:11px;height:11px;background:#fff;border:1px solid #333;"></div>
<div style="left:1665px;top:560px;width:11px;height:11px;background:#fff;border:1px solid #333;"></div>
<div style="left:1689px;top:560px;width:11px;height:11px;background:#fff;border:1px solid #333;"></div>
<div style="left:1713px;top:560px;width:11px;height:11px;background:#fff;border:1px solid #333;"></div>
<div style="left:1737px;top:560px;width:11px;height:11px;background:#fff;border:1px solid #333;"></div>
<div style="left:1614px;top:1018px;width:1px;height:20px;background:#8a8a8a;"></div>
<div style="left:1691px;top:1018px;width:1px;height:20px;background:#8a8a8a;"></div>
<div style="left:1746px;top:1018px;width:1px;height:20px;background:#8a8a8a;"></div>
<div style="left:1876px;top:1018px;width:1px;height:20px;background:#8a8a8a;"></div>
<svg class="i" style="left:1616.4px;top:1019.8px;" width="14.8" height="16.9"><use href="#medal"/></svg>
<span class="t" style="left:1635px;top:1019.5px;color:#000;letter-spacing:-0.67px;">ADR 2019</span>
<svg class="i" style="left:1692.2px;top:1019.2px;" width="17.4" height="17.4"><use href="#link"/></svg>
<span class="t" style="left:1712.5px;top:1019.5px;color:#000;letter-spacing:0.131px;">adrfu</span>
<svg class="i" style="left:1747.6px;top:1019.5px;" width="17" height="17"><use href="#clock"/></svg>
<span class="t" style="left:1767.5px;top:1019.5px;color:#000;letter-spacing:-0.45px;">16/10/2019 08:33:13</span>
<svg class="i" style="left:1880px;top:1021px;" width="14" height="14"><use href="#it"/></svg>
<svg class="i" style="left:1896.5px;top:1026.5px" width="6" height="4"><path d="M0 0H6L3 3.4Z" fill="#000"/></svg>
</body></html>
